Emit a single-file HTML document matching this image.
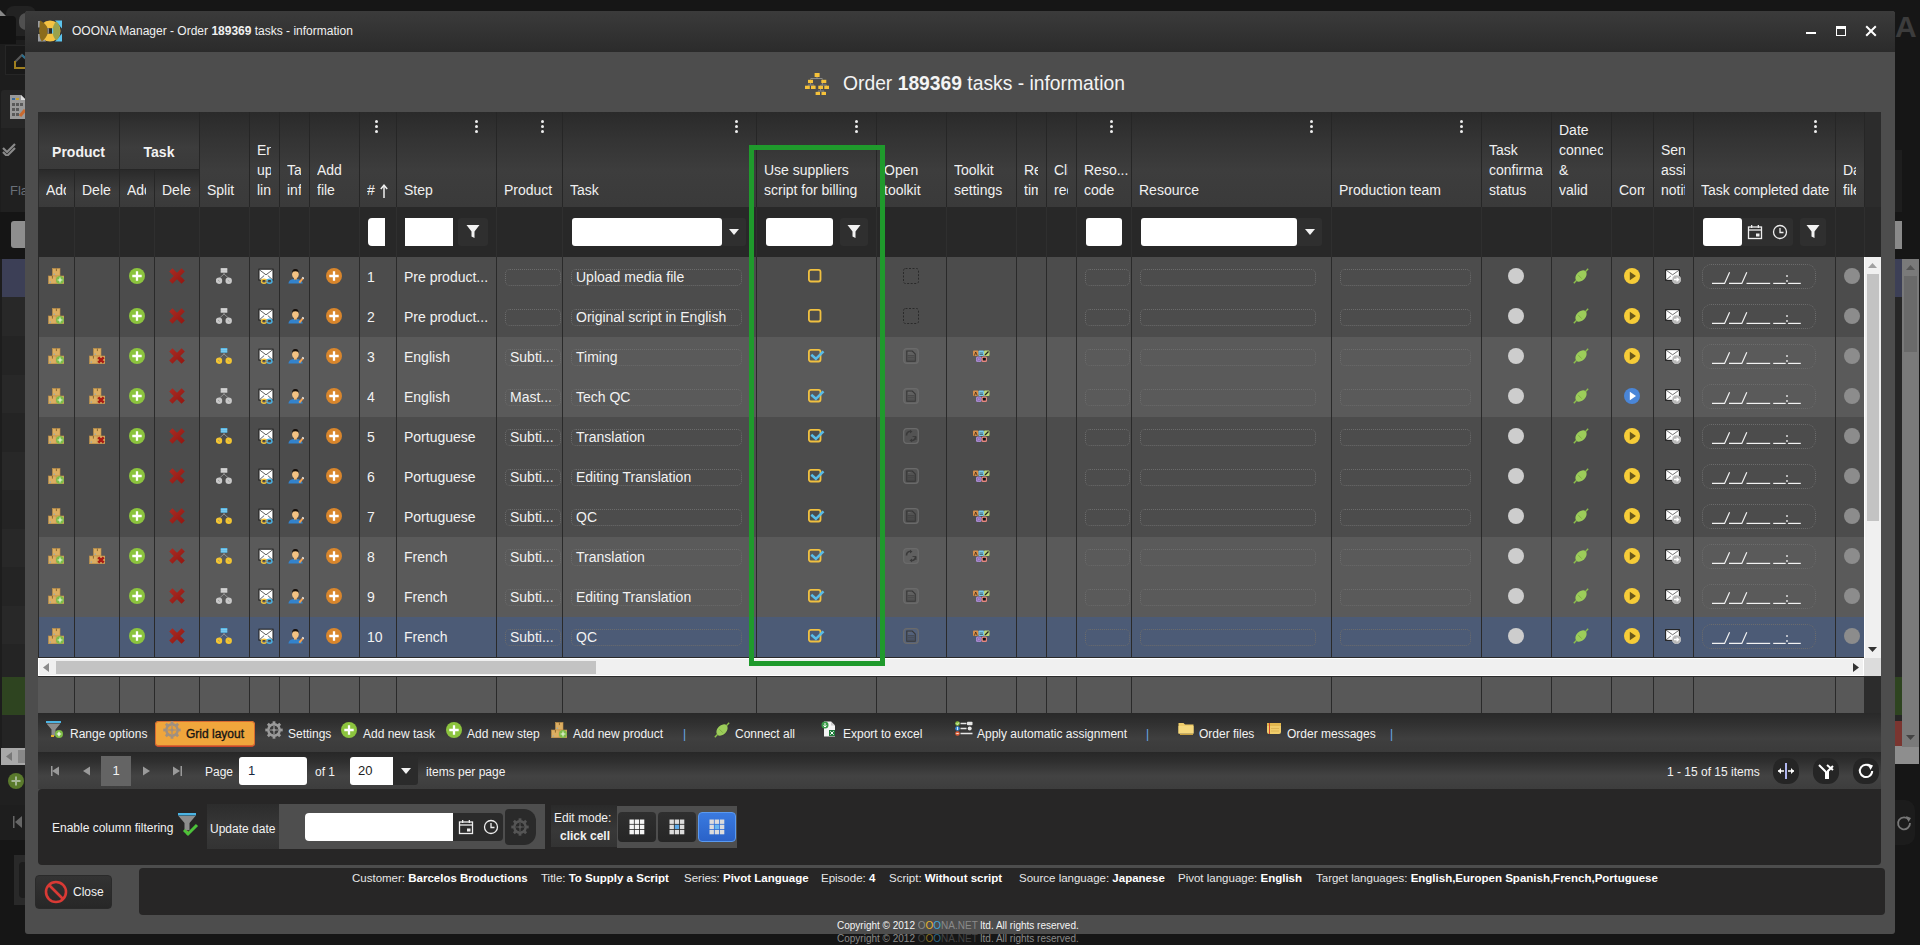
<!DOCTYPE html><html><head><meta charset="utf-8"><style>
*{margin:0;padding:0;box-sizing:border-box}
html,body{width:1920px;height:945px;overflow:hidden;background:#161616;font-family:"Liberation Sans",sans-serif;color:#f2f2f2}
.a{position:absolute}
.win{left:25px;top:11px;width:1870px;height:923px;background:#4d4d4d;border-radius:3px}
.tb{left:25px;top:11px;width:1870px;height:41px;background:linear-gradient(#3b3b3b,#2b2b2b);border-radius:3px 3px 0 0}
.hc{background:linear-gradient(#2a2a2a 0%,#343434 30%,#3d3d3d 62%,#3a3a3a 100%);border-right:1px solid #262626}
.fc{background:#282828;border-right:1px solid #2b2b2b}
.t14{font-size:14px;line-height:20px;white-space:nowrap;overflow:hidden}
.cl{background:#2c2c2c;width:1px}
.dots{width:3px;height:13px}
.dots i{position:absolute;left:0;width:3px;height:3px;border-radius:2px;background:#eee}
.inp{background:#fff;border-radius:3px}
.fbtn{background:#2f2f2f;border-radius:3px}
.dbox{border:1px dotted #6c6c6c;border-radius:5px}
.txt{font-size:14px;white-space:nowrap;line-height:20px}
.tool{font-size:12px;white-space:nowrap;line-height:16px}
</style></head><body>
<div class="a" style="left:0;top:0;width:1920px;height:945px;background:#161616"></div>
<div class="a" style="left:0;top:40px;width:25px;height:800px;background:#1d1d1d"></div>
<div class="a" style="left:5px;top:45px;width:25px;height:30px;border:1px solid #262626;background:#191919"></div>
<svg class="a" style="left:14px;top:52px" width="12" height="18" viewBox="0 0 12 18"><path d="M1 10l7-7 4 4" stroke="#5a5a5a" stroke-width="2" fill="none"/><path d="M1 9v7h11" stroke="#a08020" stroke-width="2" fill="none"/><path d="M8 3l3 3" stroke="#2a7090" stroke-width="2"/></svg>
<div class="a" style="left:1px;top:90px;width:25px;height:38px;background:#262626;border-radius:3px 0 0 0"></div>
<div class="a" style="left:6px;top:6px;width:30px;height:30px;background:#222;border-radius:8px"></div>
<svg class="a" style="left:0;top:10px" width="7" height="7" viewBox="0 0 7 7"><path d="M0 0l6 6H0z" fill="#888"/></svg>
<div class="a" style="left:0;top:16px;width:16px;height:28px;background:#121212;border-radius:0 4px 0 0"></div>
<div class="a" style="left:19px;top:13px;width:14px;height:17px;background:#505050;border-radius:8px"></div>
<svg class="a" style="left:10px;top:95px" width="16" height="24" viewBox="0 0 16 24"><path d="M0 0h11l5 5v19H0z" fill="#9a9a9a"/><path d="M11 0v5h5" fill="#ddd"/><rect x="2" y="3" width="3" height="2" fill="#3a6a9a"/><rect x="6" y="3" width="3" height="2" fill="#c8a030"/><g fill="#5a5a5a"><rect x="2" y="8" width="3" height="3"/><rect x="6" y="8" width="3" height="3"/><rect x="10" y="8" width="3" height="3"/><rect x="2" y="13" width="3" height="3"/><rect x="6" y="13" width="3" height="3"/><rect x="2" y="18" width="3" height="3"/><rect x="6" y="18" width="3" height="3"/></g><path d="M10 21l5-6" stroke="#c86a30" stroke-width="3"/></svg>
<div class="a" style="left:1px;top:128px;width:25px;height:84px;background:#202020"></div>
<svg class="a" style="left:2px;top:142px" width="14" height="14" viewBox="0 0 14 14"><path d="M1 6l4 4 8-8M1 10l4 4 8-8" stroke="#8a8a8a" stroke-width="2.2" fill="none"/></svg>
<div class="a" style="left:10px;top:183px;font-size:13px;line-height:16px;color:#6a7078">Fla</div>
<div class="a" style="left:0;top:212px;width:25px;height:47px;background:#151515"></div>
<div class="a" style="left:11px;top:221px;width:20px;height:27px;background:#8e8e8e;border-radius:3px"></div>
<div class="a" style="left:2px;top:259px;width:23px;height:40px;background:#3c3f56"></div>
<div class="a" style="left:2px;top:297px;width:23px;height:40px;background:#282828"></div>
<div class="a" style="left:2px;top:336px;width:23px;height:40px;background:#242424"></div>
<div class="a" style="left:2px;top:375px;width:23px;height:40px;background:#282828"></div>
<div class="a" style="left:2px;top:413px;width:23px;height:40px;background:#242424"></div>
<div class="a" style="left:2px;top:452px;width:23px;height:40px;background:#282828"></div>
<div class="a" style="left:2px;top:490px;width:23px;height:40px;background:#242424"></div>
<div class="a" style="left:2px;top:529px;width:23px;height:40px;background:#282828"></div>
<div class="a" style="left:2px;top:567px;width:23px;height:40px;background:#242424"></div>
<div class="a" style="left:2px;top:606px;width:23px;height:40px;background:#282828"></div>
<div class="a" style="left:2px;top:644px;width:23px;height:40px;background:#242424"></div>
<div class="a" style="left:2px;top:677px;width:23px;height:40px;background:#2e4420"></div>
<div class="a" style="left:2px;top:715px;width:23px;height:40px;background:#242424"></div>
<div class="a" style="left:1px;top:748px;width:24px;height:17px;background:#a8a8a8"></div>
<div class="a" style="left:18px;top:750px;width:7px;height:13px;background:#888"></div>
<svg class="a" style="left:6px;top:752px" width="6" height="9" viewBox="0 0 6 9"><path d="M6 0v9L0 4.5z" fill="#777"/></svg>
<div class="a" style="left:0;top:765px;width:25px;height:40px;background:#202020"></div>
<svg class="a" style="left:8px;top:773px" width="16" height="16" viewBox="0 0 16 16"><circle cx="8" cy="8" r="8" fill="#5a7a2c"/><path d="M8 3.5v9M3.5 8h9" stroke="#a8b898" stroke-width="2"/></svg>
<div class="a" style="left:0;top:805px;width:25px;height:35px;background:#1e1e1e"></div>
<svg class="a" style="left:13px;top:816px" width="9" height="12" viewBox="0 0 9 12"><rect x="0" y="0" width="1.5" height="12" fill="#666"/><path d="M9 0v12L2 6z" fill="#666"/></svg>
<div class="a" style="left:14px;top:855px;width:11px;height:50px;background:#292929"></div>
<div class="a" style="left:19px;top:862px;width:8px;height:36px;background:#1c1c1c;border-radius:4px"></div>
<div class="a" style="left:1895px;top:12px;font-size:30px;font-weight:bold;line-height:30px;color:#3c3c3c">A</div>
<div class="a" style="left:1895px;top:150px;width:7px;height:62px;background:#1e1e1e"></div>
<div class="a" style="left:1895px;top:221px;width:7px;height:28px;background:#8a8a8a"></div>
<div class="a" style="left:1895px;top:259px;width:7px;height:38px;background:#3c3f56"></div>
<div class="a" style="left:1895px;top:297px;width:7px;height:450px;background:#262626"></div>
<div class="a" style="left:1895px;top:677px;width:7px;height:38px;background:#2e4420"></div>
<div class="a" style="left:1895px;top:721px;width:7px;height:25px;background:#7a3530"></div>
<div class="a" style="left:1895px;top:746px;width:24px;height:18px;background:#8e8e8e"></div>
<div class="a" style="left:1902px;top:259px;width:17px;height:488px;background:#7a7a7a"></div>
<div class="a" style="left:1904px;top:276px;width:13px;height:76px;background:#6a6a6a"></div>
<svg class="a" style="left:1906px;top:265px" width="9" height="5" viewBox="0 0 9 5"><path d="M0 5h9L4.5 0z" fill="#555"/></svg>
<svg class="a" style="left:1906px;top:735px" width="9" height="5" viewBox="0 0 9 5"><path d="M0 0h9L4.5 5z" fill="#444"/></svg>
<div class="a" style="left:1895px;top:800px;width:20px;height:45px;background:#1c1c1c;border-radius:0 10px 10px 0"></div>
<svg class="a" style="left:1896px;top:815px" width="16" height="16" viewBox="0 0 16 16"><path d="M13 5A6 6 0 1 0 14 8" stroke="#777" stroke-width="1.8" fill="none"/><path d="M10 1l5 2-2.5 4z" fill="#777"/></svg>
<div class="a win"></div>
<div class="a tb"></div>
<div class="a" style="left:72px;top:23px;font-size:12px;line-height:16px;color:#f0f0f0;white-space:nowrap">OOONA Manager - Order <b>189369</b> tasks - information</div>
<div class="a" style="left:805px;top:73px;width:26px;height:24px"><svg width="26" height="24" viewBox="0 0 26 24"><g stroke="#9a9a9a" stroke-width="0.8" fill="none"><path d="M12 4v1.5M5.5 6.5v1M17.5 6.5v1M5.5 5.5h12M5.5 10v1.5M3 12.5v1M9 12.5v1M3 12h6M17.5 10v1.5M15.5 12.5v1M21.5 12.5v1M15.5 12h6M15.5 16v1.5M13 18.5v1M19 18.5v1M13 18h6"/></g><g fill="#f6c23a"><rect x="9.6" y="0" width="5" height="4"/><rect x="3" y="6.8" width="5" height="3.3"/><rect x="16.3" y="6.8" width="5" height="3.3"/><rect x="0" y="12.7" width="4.8" height="3.3"/><rect x="6" y="12.7" width="4.6" height="3.3"/><rect x="13.3" y="12.7" width="4.7" height="3.3"/><rect x="19.3" y="12.7" width="4.7" height="3.3"/><rect x="10.6" y="18.9" width="4.4" height="3.1"/><rect x="16.5" y="18.9" width="4.5" height="3.1"/></g></svg></div>
<div class="a" style="left:843px;top:73px;font-size:19.3px;line-height:22px;color:#f4f4f4;white-space:nowrap">Order <b>189369</b> tasks - information</div>
<div class="a" style="left:38px;top:112px;width:1843px;height:145px;background:#2c2c2c"></div>
<div class="a hc" style="left:39px;top:170px;width:36px;height:37px"></div>
<div class="a t14" style="left:46px;top:180px;width:20px;color:#f0f0f0">Add</div>
<div class="a hc" style="left:75px;top:170px;width:45px;height:37px"></div>
<div class="a t14" style="left:82px;top:180px;width:29px;color:#f0f0f0">Delete</div>
<div class="a hc" style="left:120px;top:170px;width:35px;height:37px"></div>
<div class="a t14" style="left:127px;top:180px;width:19px;color:#f0f0f0">Add</div>
<div class="a hc" style="left:155px;top:170px;width:45px;height:37px"></div>
<div class="a t14" style="left:162px;top:180px;width:29px;color:#f0f0f0">Delete</div>
<div class="a hc" style="left:200px;top:112px;width:50px;height:95px"></div>
<div class="a t14" style="left:207px;top:180px;width:70px;color:#f0f0f0">Split</div>
<div class="a hc" style="left:250px;top:112px;width:30px;height:95px"></div>
<div class="a t14" style="left:257px;top:140px;width:14px;color:#f0f0f0">Enable<br>upload<br>link</div>
<div class="a hc" style="left:280px;top:112px;width:30px;height:95px"></div>
<div class="a t14" style="left:287px;top:160px;width:14px;color:#f0f0f0">Task<br>info</div>
<div class="a hc" style="left:310px;top:112px;width:50px;height:95px"></div>
<div class="a t14" style="left:317px;top:160px;width:70px;color:#f0f0f0">Add<br>file</div>
<div class="a hc" style="left:360px;top:112px;width:37px;height:95px"></div>
<div class="a t14" style="left:367px;top:180px;width:57px;color:#f0f0f0">#</div>
<div class="a dots" style="left:375px;top:120px"><i style="top:0"></i><i style="top:5px"></i><i style="top:10px"></i></div>
<div class="a hc" style="left:397px;top:112px;width:100px;height:95px"></div>
<div class="a t14" style="left:404px;top:180px;width:120px;color:#f0f0f0">Step</div>
<div class="a dots" style="left:475px;top:120px"><i style="top:0"></i><i style="top:5px"></i><i style="top:10px"></i></div>
<div class="a hc" style="left:497px;top:112px;width:66px;height:95px"></div>
<div class="a t14" style="left:504px;top:180px;width:86px;color:#f0f0f0">Product</div>
<div class="a dots" style="left:541px;top:120px"><i style="top:0"></i><i style="top:5px"></i><i style="top:10px"></i></div>
<div class="a hc" style="left:563px;top:112px;width:194px;height:95px"></div>
<div class="a t14" style="left:570px;top:180px;width:214px;color:#f0f0f0">Task</div>
<div class="a dots" style="left:735px;top:120px"><i style="top:0"></i><i style="top:5px"></i><i style="top:10px"></i></div>
<div class="a hc" style="left:757px;top:112px;width:120px;height:95px"></div>
<div class="a t14" style="left:764px;top:160px;width:140px;color:#f0f0f0">Use suppliers<br>script for billing</div>
<div class="a dots" style="left:855px;top:120px"><i style="top:0"></i><i style="top:5px"></i><i style="top:10px"></i></div>
<div class="a hc" style="left:877px;top:112px;width:70px;height:95px"></div>
<div class="a t14" style="left:884px;top:160px;width:90px;color:#f0f0f0">Open<br>toolkit</div>
<div class="a hc" style="left:947px;top:112px;width:70px;height:95px"></div>
<div class="a t14" style="left:954px;top:160px;width:90px;color:#f0f0f0">Toolkit<br>settings</div>
<div class="a hc" style="left:1017px;top:112px;width:30px;height:95px"></div>
<div class="a t14" style="left:1024px;top:160px;width:14px;color:#f0f0f0">Req<br>time</div>
<div class="a hc" style="left:1047px;top:112px;width:30px;height:95px"></div>
<div class="a t14" style="left:1054px;top:160px;width:14px;color:#f0f0f0">Client<br>req</div>
<div class="a hc" style="left:1077px;top:112px;width:55px;height:95px"></div>
<div class="a t14" style="left:1084px;top:160px;width:75px;color:#f0f0f0">Reso...<br>code</div>
<div class="a dots" style="left:1110px;top:120px"><i style="top:0"></i><i style="top:5px"></i><i style="top:10px"></i></div>
<div class="a hc" style="left:1132px;top:112px;width:200px;height:95px"></div>
<div class="a t14" style="left:1139px;top:180px;width:220px;color:#f0f0f0">Resource</div>
<div class="a dots" style="left:1310px;top:120px"><i style="top:0"></i><i style="top:5px"></i><i style="top:10px"></i></div>
<div class="a hc" style="left:1332px;top:112px;width:150px;height:95px"></div>
<div class="a t14" style="left:1339px;top:180px;width:170px;color:#f0f0f0">Production team</div>
<div class="a dots" style="left:1460px;top:120px"><i style="top:0"></i><i style="top:5px"></i><i style="top:10px"></i></div>
<div class="a hc" style="left:1482px;top:112px;width:70px;height:95px"></div>
<div class="a t14" style="left:1489px;top:140px;width:54px;color:#f0f0f0">Task<br>confirmation<br>status</div>
<div class="a hc" style="left:1552px;top:112px;width:60px;height:95px"></div>
<div class="a t14" style="left:1559px;top:120px;width:44px;color:#f0f0f0">Date<br>connection<br>&<br>valid</div>
<div class="a hc" style="left:1612px;top:112px;width:42px;height:95px"></div>
<div class="a t14" style="left:1619px;top:180px;width:26px;color:#f0f0f0">Comments</div>
<div class="a hc" style="left:1654px;top:112px;width:40px;height:95px"></div>
<div class="a t14" style="left:1661px;top:140px;width:24px;color:#f0f0f0">Send<br>assignment<br>notification</div>
<div class="a hc" style="left:1694px;top:112px;width:142px;height:95px"></div>
<div class="a t14" style="left:1701px;top:180px;width:162px;color:#f0f0f0">Task completed date</div>
<div class="a dots" style="left:1814px;top:120px"><i style="top:0"></i><i style="top:5px"></i><i style="top:10px"></i></div>
<div class="a hc" style="left:1836px;top:112px;width:29px;height:95px"></div>
<div class="a t14" style="left:1843px;top:160px;width:13px;color:#f0f0f0">Date<br>files</div>
<svg class="a" style="left:380px;top:184px" width="8" height="14" viewBox="0 0 8 14"><path d="M4 1.5v12.5" stroke="#f0f0f0" stroke-width="1.5"/><path d="M0.8 5L4 1.2 7.2 5" stroke="#f0f0f0" stroke-width="1.5" fill="none"/></svg>
<div class="a hc" style="left:39px;top:112px;width:81px;height:58px;border-bottom:1px solid #262626"></div>
<div class="a" style="left:38px;top:143px;width:81px;text-align:center;font-size:14px;font-weight:bold;line-height:18px">Product</div>
<div class="a hc" style="left:120px;top:112px;width:80px;height:58px;border-bottom:1px solid #262626"></div>
<div class="a" style="left:119px;top:143px;width:80px;text-align:center;font-size:14px;font-weight:bold;line-height:18px">Task</div>
<div class="a" style="left:38px;top:207px;width:1843px;height:50px;background:#282828"></div>
<div class="a" style="left:74px;top:207px;width:1px;height:50px;background:#2f2f2f"></div>
<div class="a" style="left:119px;top:207px;width:1px;height:50px;background:#2f2f2f"></div>
<div class="a" style="left:154px;top:207px;width:1px;height:50px;background:#2f2f2f"></div>
<div class="a" style="left:199px;top:207px;width:1px;height:50px;background:#2f2f2f"></div>
<div class="a" style="left:249px;top:207px;width:1px;height:50px;background:#2f2f2f"></div>
<div class="a" style="left:279px;top:207px;width:1px;height:50px;background:#2f2f2f"></div>
<div class="a" style="left:309px;top:207px;width:1px;height:50px;background:#2f2f2f"></div>
<div class="a" style="left:359px;top:207px;width:1px;height:50px;background:#2f2f2f"></div>
<div class="a" style="left:396px;top:207px;width:1px;height:50px;background:#2f2f2f"></div>
<div class="a" style="left:496px;top:207px;width:1px;height:50px;background:#2f2f2f"></div>
<div class="a" style="left:562px;top:207px;width:1px;height:50px;background:#2f2f2f"></div>
<div class="a" style="left:756px;top:207px;width:1px;height:50px;background:#2f2f2f"></div>
<div class="a" style="left:876px;top:207px;width:1px;height:50px;background:#2f2f2f"></div>
<div class="a" style="left:946px;top:207px;width:1px;height:50px;background:#2f2f2f"></div>
<div class="a" style="left:1016px;top:207px;width:1px;height:50px;background:#2f2f2f"></div>
<div class="a" style="left:1046px;top:207px;width:1px;height:50px;background:#2f2f2f"></div>
<div class="a" style="left:1076px;top:207px;width:1px;height:50px;background:#2f2f2f"></div>
<div class="a" style="left:1131px;top:207px;width:1px;height:50px;background:#2f2f2f"></div>
<div class="a" style="left:1331px;top:207px;width:1px;height:50px;background:#2f2f2f"></div>
<div class="a" style="left:1481px;top:207px;width:1px;height:50px;background:#2f2f2f"></div>
<div class="a" style="left:1551px;top:207px;width:1px;height:50px;background:#2f2f2f"></div>
<div class="a" style="left:1611px;top:207px;width:1px;height:50px;background:#2f2f2f"></div>
<div class="a" style="left:1653px;top:207px;width:1px;height:50px;background:#2f2f2f"></div>
<div class="a" style="left:1693px;top:207px;width:1px;height:50px;background:#2f2f2f"></div>
<div class="a" style="left:1835px;top:207px;width:1px;height:50px;background:#2f2f2f"></div>
<div class="a" style="left:1864px;top:207px;width:1px;height:50px;background:#2f2f2f"></div>
<div class="a inp" style="left:368px;top:218px;width:17px;height:28px;border-radius:4px 0 0 4px"></div>
<div class="a inp" style="left:405px;top:218px;width:48px;height:28px;border-radius:0"></div>
<div class="a fbtn" style="left:458px;top:218px;width:30px;height:28px"></div>
<svg class="a" style="left:466.0px;top:224px" width="14" height="16" viewBox="0 0 14 16"><path d="M0.5 1h13l-5 6.5v6.5l-3 -1.5v-5z" fill="#f2f2f2"/></svg>
<div class="a fbtn" style="left:572px;top:218px;width:174px;height:28px"></div>
<div class="a inp" style="left:572px;top:218px;width:150px;height:28px"></div>
<div class="a fbtn" style="left:722px;top:218px;width:24px;height:28px"></div>
<svg class="a" style="left:729.0px;top:228px" width="10" height="8" viewBox="0 0 10 8"><path d="M0 1h10l-5 6z" fill="#f2f2f2"/></svg>
<div class="a inp" style="left:766px;top:218px;width:67px;height:28px"></div>
<div class="a fbtn" style="left:840px;top:218px;width:28px;height:28px"></div>
<svg class="a" style="left:847.0px;top:224px" width="14" height="16" viewBox="0 0 14 16"><path d="M0.5 1h13l-5 6.5v6.5l-3 -1.5v-5z" fill="#f2f2f2"/></svg>
<div class="a inp" style="left:1086px;top:218px;width:36px;height:28px"></div>
<div class="a fbtn" style="left:1141px;top:218px;width:181px;height:28px"></div>
<div class="a inp" style="left:1141px;top:218px;width:156px;height:28px"></div>
<div class="a fbtn" style="left:1297px;top:218px;width:25px;height:28px"></div>
<svg class="a" style="left:1304.5px;top:228px" width="10" height="8" viewBox="0 0 10 8"><path d="M0 1h10l-5 6z" fill="#f2f2f2"/></svg>
<div class="a fbtn" style="left:1703px;top:218px;width:90px;height:28px"></div>
<div class="a inp" style="left:1703px;top:218px;width:39px;height:28px"></div>
<svg class="a" style="left:1747px;top:224px" width="16" height="16" viewBox="0 0 16 16"><rect x="1.5" y="3" width="13" height="11.5" fill="none" stroke="#eee" stroke-width="1.3"/><line x1="1.5" y1="6" x2="14.5" y2="6" stroke="#eee" stroke-width="1.3"/><rect x="4" y="1" width="1.3" height="3" fill="#eee"/><rect x="10.7" y="1" width="1.3" height="3" fill="#eee"/><rect x="9" y="9.5" width="3.5" height="3" fill="#eee"/></svg>
<svg class="a" style="left:1772px;top:224px" width="16" height="16" viewBox="0 0 16 16"><circle cx="8" cy="8" r="6.5" fill="none" stroke="#eee" stroke-width="1.3"/><path d="M8 4v4.5h3.5" fill="none" stroke="#eee" stroke-width="1.3"/></svg>
<div class="a fbtn" style="left:1800px;top:218px;width:26px;height:28px"></div>
<svg class="a" style="left:1806.0px;top:224px" width="14" height="16" viewBox="0 0 14 16"><path d="M0.5 1h13l-5 6.5v6.5l-3 -1.5v-5z" fill="#f2f2f2"/></svg>
<div class="a" style="left:38px;top:257px;width:1826px;height:40px;background:#4c4c4c"></div>
<div class="a" style="left:48px;top:268px;width:16px;height:16px"><svg width="16" height="16" viewBox="0 0 16 16"><rect x="4.5" y="0.5" width="7.5" height="7.5" fill="#dcae62" stroke="#c29247" stroke-width="0.6"/><rect x="0.5" y="8" width="15.5" height="7.8" fill="#dcae62" stroke="#c29247" stroke-width="0.6"/><line x1="8.25" y1="8" x2="8.25" y2="15.8" stroke="#c29247" stroke-width="0.6"/><rect x="7.9" y="0.5" width="0.9" height="2.6" fill="#8a6428"/><rect x="3.9" y="8" width="0.9" height="2.6" fill="#8a6428"/><rect x="5.6" y="5.6" width="1.4" height="1.4" fill="#9aa"/><rect x="1.6" y="13.4" width="1.4" height="1.4" fill="#9aa"/><circle cx="12" cy="12" r="4" fill="#7fbc4a"/><path d="M12 9.6v4.8M9.6 12h4.8" stroke="#e8f5dc" stroke-width="1.1"/></svg></div>
<div class="a" style="left:129px;top:268px;width:16px;height:16px"><svg width="16" height="16" viewBox="0 0 16 16"><circle cx="8" cy="8" r="8" fill="#8cc43e"/><path d="M8 3.3v9.4M3.3 8h9.4" stroke="#fff" stroke-width="2.3"/></svg></div>
<div class="a" style="left:169px;top:268px;width:16px;height:16px"><svg width="16" height="16" viewBox="0 0 16 16"><defs><linearGradient id="xg" x1="0" y1="0" x2="1" y2="1"><stop offset="0" stop-color="#a82a22"/><stop offset="1" stop-color="#941812"/></linearGradient></defs><path d="M1.8 1.8l12.4 12.4M14.2 1.8L1.8 14.2" stroke="url(#xg)" stroke-width="4.6"/></svg></div>
<div class="a" style="left:216px;top:268px;width:16px;height:16px"><svg width="16" height="16" viewBox="0 0 16 16"><rect x="4.7" y="0" width="6.6" height="4.8" fill="#c4c4c4"/><path d="M4.7 1.6h6.6M4.7 3.2h6.6" stroke="#fff" stroke-width="0.5" opacity="0.6"/><path d="M8 4.8v1.2L3 10.5M8 6l5 4.5" stroke="#999" stroke-width="0.9" fill="none"/><circle cx="3" cy="12.7" r="3.2" fill="#c8c8c8"/><circle cx="12.7" cy="12.7" r="3.2" fill="#c8c8c8"/><path d="M2 12l1.8 1.6M11.7 12l1.8 1.6" stroke="#888" stroke-width="0.6"/></svg></div>
<div class="a" style="left:258px;top:268px;width:16px;height:16px"><svg width="16" height="16" viewBox="0 0 16 16"><rect x="1" y="1.2" width="14" height="11" fill="#fff" stroke="#1a1a1a" stroke-width="1"/><path d="M1 1.5l7 5.3 7-5.3M1.2 12l5-4.5M14.8 12l-5-4.5" stroke="#333" stroke-width="0.8" fill="none"/><ellipse cx="6" cy="13.3" rx="2.5" ry="2" fill="none" stroke="#f0c23a" stroke-width="1.4"/><ellipse cx="11.5" cy="13.3" rx="2.5" ry="2" fill="none" stroke="#49b2e4" stroke-width="1.4"/><path d="M7.5 13.3h2.5" stroke="#888" stroke-width="1"/></svg></div>
<div class="a" style="left:288px;top:268px;width:16px;height:16px"><svg width="16" height="16" viewBox="0 0 16 16"><path d="M0.4 15.6C0.6 12.6 2.8 11.2 5.3 10.9L7.4 12.2 9.5 10.9C12 11.2 14.4 12.6 14.8 15.6z" fill="#3383cc"/><rect x="6" y="9" width="2.8" height="2.6" fill="#f0bc7c"/><ellipse cx="7.4" cy="6.2" rx="3.3" ry="3.9" fill="#f3c283"/><path d="M4.1 5.6C3.8 2.2 5.4 1 7.4 1s3.6 1.2 3.3 4.6C10.4 4 9.6 3.3 7.4 3.3S4.4 4 4.1 5.6z" fill="#17110c"/><path d="M11.3 14.6l4-4.8" stroke="#f0a050" stroke-width="2.1"/><path d="M14.6 10.6l1-1.2" stroke="#e8e8e8" stroke-width="2.1"/></svg></div>
<div class="a" style="left:326px;top:268px;width:16px;height:16px"><svg width="16" height="16" viewBox="0 0 16 16"><circle cx="8" cy="8" r="8" fill="#d9862c"/><path d="M8 3.3v9.4M3.3 8h9.4" stroke="#fff" stroke-width="2.3"/></svg></div>
<div class="a txt" style="left:367px;top:267px">1</div>
<div class="a txt" style="left:404px;top:267px">Pre product...</div>
<div class="a dbox" style="left:505px;top:269px;width:56px;height:17px"></div>
<div class="a dbox" style="left:571px;top:269px;width:171px;height:17px"></div>
<div class="a txt" style="left:576px;top:267px">Upload media file</div>
<div class="a" style="left:807px;top:268px;width:16px;height:16px"><svg width="16" height="16" viewBox="0 0 16 16"><rect x="1.9" y="1.9" width="11.6" height="11.6" rx="2" fill="none" stroke="#f0c040" stroke-width="1.8"/></svg></div>
<div class="a" style="left:903px;top:268px;width:16px;height:16px"><svg width="16" height="16" viewBox="0 0 16 16"><rect x="0.5" y="0.5" width="15" height="15" rx="2" fill="none" stroke="#2a2a2a" stroke-dasharray="2 1.5"/></svg></div>
<div class="a dbox" style="left:1085px;top:269px;width:45px;height:17px"></div>
<div class="a dbox" style="left:1140px;top:269px;width:176px;height:17px"></div>
<div class="a dbox" style="left:1340px;top:269px;width:131px;height:17px"></div>
<div class="a" style="left:1508px;top:268px;width:16px;height:16px"><svg width="16" height="16" viewBox="0 0 16 16"><circle cx="8" cy="8" r="8" fill="#cdcdcd"/></svg></div>
<div class="a" style="left:1573px;top:268px;width:16px;height:16px"><svg width="16" height="16" viewBox="0 0 16 16"><path d="M0.8 15.2l2.6-2.6M12.6 3.4l2.6-2.6" stroke="#8cc04a" stroke-width="1.4"/><ellipse cx="8" cy="8" rx="6.6" ry="4.5" transform="rotate(-45 8 8)" fill="#9ccd5a"/><path d="M5.3 7.2l3.5 3.5" stroke="#7aaa3a" stroke-width="0.8"/></svg></div>
<div class="a" style="left:1624px;top:268px;width:16px;height:16px"><svg width="16" height="16" viewBox="0 0 16 16"><circle cx="8" cy="8" r="8" fill="#f6cc38"/><path d="M5.8 3.8v8.4l6.2-4.2z" fill="#6a5818"/></svg></div>
<div class="a" style="left:1665px;top:268px;width:16px;height:16px"><svg width="16" height="16" viewBox="0 0 16 16"><rect x="0.6" y="1.6" width="13.8" height="10.8" fill="#fff" stroke="#222" stroke-width="1.1"/><path d="M0.6 1.8l7 5 7-5M0.8 12.2l5-4.2M14.2 12.2l-5-4.2" stroke="#333" stroke-width="0.7" fill="none"/><circle cx="11.5" cy="11.5" r="4.3" fill="#b8b8b8" stroke="#ddd" stroke-width="0.6"/><path d="M9 11.5h4.3M11.6 9.6l2 1.9-2 1.9" stroke="#fff" stroke-width="1.3" fill="none"/></svg></div>
<div class="a dbox" style="left:1702px;top:264px;width:114px;height:25px;border-radius:9px"></div>
<div class="a" style="left:1702px;top:264px;width:120px;height:26px"><svg width="120" height="26" viewBox="0 0 120 26"><g stroke="#f2f2f2" stroke-width="1.2" fill="none"><path d="M10 19.4h12.6l5-11.2"/><path d="M27 19.4h12.8l5-11.2"/><path d="M44.5 19.4h23.7"/><path d="M71.2 19.4h12.5"/><path d="M86.1 19.4h12.7"/></g><rect x="84.2" y="11.2" width="1.6" height="1.6" fill="#f2f2f2"/><rect x="84.2" y="16.2" width="1.6" height="1.6" fill="#f2f2f2"/></svg></div>
<div class="a" style="left:1844px;top:268px;width:16px;height:16px"><svg width="16" height="16" viewBox="0 0 16 16"><circle cx="8" cy="8" r="8" fill="#8c8c8c"/></svg></div>
<div class="a" style="left:38px;top:297px;width:1826px;height:40px;background:#4c4c4c"></div>
<div class="a" style="left:48px;top:308px;width:16px;height:16px"><svg width="16" height="16" viewBox="0 0 16 16"><rect x="4.5" y="0.5" width="7.5" height="7.5" fill="#dcae62" stroke="#c29247" stroke-width="0.6"/><rect x="0.5" y="8" width="15.5" height="7.8" fill="#dcae62" stroke="#c29247" stroke-width="0.6"/><line x1="8.25" y1="8" x2="8.25" y2="15.8" stroke="#c29247" stroke-width="0.6"/><rect x="7.9" y="0.5" width="0.9" height="2.6" fill="#8a6428"/><rect x="3.9" y="8" width="0.9" height="2.6" fill="#8a6428"/><rect x="5.6" y="5.6" width="1.4" height="1.4" fill="#9aa"/><rect x="1.6" y="13.4" width="1.4" height="1.4" fill="#9aa"/><circle cx="12" cy="12" r="4" fill="#7fbc4a"/><path d="M12 9.6v4.8M9.6 12h4.8" stroke="#e8f5dc" stroke-width="1.1"/></svg></div>
<div class="a" style="left:129px;top:308px;width:16px;height:16px"><svg width="16" height="16" viewBox="0 0 16 16"><circle cx="8" cy="8" r="8" fill="#8cc43e"/><path d="M8 3.3v9.4M3.3 8h9.4" stroke="#fff" stroke-width="2.3"/></svg></div>
<div class="a" style="left:169px;top:308px;width:16px;height:16px"><svg width="16" height="16" viewBox="0 0 16 16"><defs><linearGradient id="xg" x1="0" y1="0" x2="1" y2="1"><stop offset="0" stop-color="#a82a22"/><stop offset="1" stop-color="#941812"/></linearGradient></defs><path d="M1.8 1.8l12.4 12.4M14.2 1.8L1.8 14.2" stroke="url(#xg)" stroke-width="4.6"/></svg></div>
<div class="a" style="left:216px;top:308px;width:16px;height:16px"><svg width="16" height="16" viewBox="0 0 16 16"><rect x="4.7" y="0" width="6.6" height="4.8" fill="#c4c4c4"/><path d="M4.7 1.6h6.6M4.7 3.2h6.6" stroke="#fff" stroke-width="0.5" opacity="0.6"/><path d="M8 4.8v1.2L3 10.5M8 6l5 4.5" stroke="#999" stroke-width="0.9" fill="none"/><circle cx="3" cy="12.7" r="3.2" fill="#c8c8c8"/><circle cx="12.7" cy="12.7" r="3.2" fill="#c8c8c8"/><path d="M2 12l1.8 1.6M11.7 12l1.8 1.6" stroke="#888" stroke-width="0.6"/></svg></div>
<div class="a" style="left:258px;top:308px;width:16px;height:16px"><svg width="16" height="16" viewBox="0 0 16 16"><rect x="1" y="1.2" width="14" height="11" fill="#fff" stroke="#1a1a1a" stroke-width="1"/><path d="M1 1.5l7 5.3 7-5.3M1.2 12l5-4.5M14.8 12l-5-4.5" stroke="#333" stroke-width="0.8" fill="none"/><ellipse cx="6" cy="13.3" rx="2.5" ry="2" fill="none" stroke="#f0c23a" stroke-width="1.4"/><ellipse cx="11.5" cy="13.3" rx="2.5" ry="2" fill="none" stroke="#49b2e4" stroke-width="1.4"/><path d="M7.5 13.3h2.5" stroke="#888" stroke-width="1"/></svg></div>
<div class="a" style="left:288px;top:308px;width:16px;height:16px"><svg width="16" height="16" viewBox="0 0 16 16"><path d="M0.4 15.6C0.6 12.6 2.8 11.2 5.3 10.9L7.4 12.2 9.5 10.9C12 11.2 14.4 12.6 14.8 15.6z" fill="#3383cc"/><rect x="6" y="9" width="2.8" height="2.6" fill="#f0bc7c"/><ellipse cx="7.4" cy="6.2" rx="3.3" ry="3.9" fill="#f3c283"/><path d="M4.1 5.6C3.8 2.2 5.4 1 7.4 1s3.6 1.2 3.3 4.6C10.4 4 9.6 3.3 7.4 3.3S4.4 4 4.1 5.6z" fill="#17110c"/><path d="M11.3 14.6l4-4.8" stroke="#f0a050" stroke-width="2.1"/><path d="M14.6 10.6l1-1.2" stroke="#e8e8e8" stroke-width="2.1"/></svg></div>
<div class="a" style="left:326px;top:308px;width:16px;height:16px"><svg width="16" height="16" viewBox="0 0 16 16"><circle cx="8" cy="8" r="8" fill="#d9862c"/><path d="M8 3.3v9.4M3.3 8h9.4" stroke="#fff" stroke-width="2.3"/></svg></div>
<div class="a txt" style="left:367px;top:307px">2</div>
<div class="a txt" style="left:404px;top:307px">Pre product...</div>
<div class="a dbox" style="left:505px;top:309px;width:56px;height:17px"></div>
<div class="a dbox" style="left:571px;top:309px;width:171px;height:17px"></div>
<div class="a txt" style="left:576px;top:307px">Original script in English</div>
<div class="a" style="left:807px;top:308px;width:16px;height:16px"><svg width="16" height="16" viewBox="0 0 16 16"><rect x="1.9" y="1.9" width="11.6" height="11.6" rx="2" fill="none" stroke="#f0c040" stroke-width="1.8"/></svg></div>
<div class="a" style="left:903px;top:308px;width:16px;height:16px"><svg width="16" height="16" viewBox="0 0 16 16"><rect x="0.5" y="0.5" width="15" height="15" rx="2" fill="none" stroke="#2a2a2a" stroke-dasharray="2 1.5"/></svg></div>
<div class="a dbox" style="left:1085px;top:309px;width:45px;height:17px"></div>
<div class="a dbox" style="left:1140px;top:309px;width:176px;height:17px"></div>
<div class="a dbox" style="left:1340px;top:309px;width:131px;height:17px"></div>
<div class="a" style="left:1508px;top:308px;width:16px;height:16px"><svg width="16" height="16" viewBox="0 0 16 16"><circle cx="8" cy="8" r="8" fill="#cdcdcd"/></svg></div>
<div class="a" style="left:1573px;top:308px;width:16px;height:16px"><svg width="16" height="16" viewBox="0 0 16 16"><path d="M0.8 15.2l2.6-2.6M12.6 3.4l2.6-2.6" stroke="#8cc04a" stroke-width="1.4"/><ellipse cx="8" cy="8" rx="6.6" ry="4.5" transform="rotate(-45 8 8)" fill="#9ccd5a"/><path d="M5.3 7.2l3.5 3.5" stroke="#7aaa3a" stroke-width="0.8"/></svg></div>
<div class="a" style="left:1624px;top:308px;width:16px;height:16px"><svg width="16" height="16" viewBox="0 0 16 16"><circle cx="8" cy="8" r="8" fill="#f6cc38"/><path d="M5.8 3.8v8.4l6.2-4.2z" fill="#6a5818"/></svg></div>
<div class="a" style="left:1665px;top:308px;width:16px;height:16px"><svg width="16" height="16" viewBox="0 0 16 16"><rect x="0.6" y="1.6" width="13.8" height="10.8" fill="#fff" stroke="#222" stroke-width="1.1"/><path d="M0.6 1.8l7 5 7-5M0.8 12.2l5-4.2M14.2 12.2l-5-4.2" stroke="#333" stroke-width="0.7" fill="none"/><circle cx="11.5" cy="11.5" r="4.3" fill="#b8b8b8" stroke="#ddd" stroke-width="0.6"/><path d="M9 11.5h4.3M11.6 9.6l2 1.9-2 1.9" stroke="#fff" stroke-width="1.3" fill="none"/></svg></div>
<div class="a dbox" style="left:1702px;top:304px;width:114px;height:25px;border-radius:9px"></div>
<div class="a" style="left:1702px;top:304px;width:120px;height:26px"><svg width="120" height="26" viewBox="0 0 120 26"><g stroke="#f2f2f2" stroke-width="1.2" fill="none"><path d="M10 19.4h12.6l5-11.2"/><path d="M27 19.4h12.8l5-11.2"/><path d="M44.5 19.4h23.7"/><path d="M71.2 19.4h12.5"/><path d="M86.1 19.4h12.7"/></g><rect x="84.2" y="11.2" width="1.6" height="1.6" fill="#f2f2f2"/><rect x="84.2" y="16.2" width="1.6" height="1.6" fill="#f2f2f2"/></svg></div>
<div class="a" style="left:1844px;top:308px;width:16px;height:16px"><svg width="16" height="16" viewBox="0 0 16 16"><circle cx="8" cy="8" r="8" fill="#8c8c8c"/></svg></div>
<div class="a" style="left:38px;top:337px;width:1826px;height:40px;background:#5a5a5a"></div>
<div class="a" style="left:48px;top:348px;width:16px;height:16px"><svg width="16" height="16" viewBox="0 0 16 16"><rect x="4.5" y="0.5" width="7.5" height="7.5" fill="#dcae62" stroke="#c29247" stroke-width="0.6"/><rect x="0.5" y="8" width="15.5" height="7.8" fill="#dcae62" stroke="#c29247" stroke-width="0.6"/><line x1="8.25" y1="8" x2="8.25" y2="15.8" stroke="#c29247" stroke-width="0.6"/><rect x="7.9" y="0.5" width="0.9" height="2.6" fill="#8a6428"/><rect x="3.9" y="8" width="0.9" height="2.6" fill="#8a6428"/><rect x="5.6" y="5.6" width="1.4" height="1.4" fill="#9aa"/><rect x="1.6" y="13.4" width="1.4" height="1.4" fill="#9aa"/><circle cx="12" cy="12" r="4" fill="#7fbc4a"/><path d="M12 9.6v4.8M9.6 12h4.8" stroke="#e8f5dc" stroke-width="1.1"/></svg></div>
<div class="a" style="left:89px;top:348px;width:16px;height:16px"><svg width="16" height="16" viewBox="0 0 16 16"><rect x="4.5" y="0.5" width="7.5" height="7.5" fill="#dcae62" stroke="#c29247" stroke-width="0.6"/><rect x="0.5" y="8" width="15.5" height="7.8" fill="#dcae62" stroke="#c29247" stroke-width="0.6"/><line x1="8.25" y1="8" x2="8.25" y2="15.8" stroke="#c29247" stroke-width="0.6"/><rect x="7.9" y="0.5" width="0.9" height="2.6" fill="#8a6428"/><rect x="3.9" y="8" width="0.9" height="2.6" fill="#8a6428"/><rect x="5.6" y="5.6" width="1.4" height="1.4" fill="#9aa"/><rect x="1.6" y="13.4" width="1.4" height="1.4" fill="#9aa"/><path d="M9.3 9.3l5.4 5.4M14.7 9.3l-5.4 5.4" stroke="#a81a14" stroke-width="2.6"/></svg></div>
<div class="a" style="left:129px;top:348px;width:16px;height:16px"><svg width="16" height="16" viewBox="0 0 16 16"><circle cx="8" cy="8" r="8" fill="#8cc43e"/><path d="M8 3.3v9.4M3.3 8h9.4" stroke="#fff" stroke-width="2.3"/></svg></div>
<div class="a" style="left:169px;top:348px;width:16px;height:16px"><svg width="16" height="16" viewBox="0 0 16 16"><defs><linearGradient id="xg" x1="0" y1="0" x2="1" y2="1"><stop offset="0" stop-color="#a82a22"/><stop offset="1" stop-color="#941812"/></linearGradient></defs><path d="M1.8 1.8l12.4 12.4M14.2 1.8L1.8 14.2" stroke="url(#xg)" stroke-width="4.6"/></svg></div>
<div class="a" style="left:216px;top:348px;width:16px;height:16px"><svg width="16" height="16" viewBox="0 0 16 16"><rect x="4.7" y="0" width="6.6" height="4.8" fill="#55b9e8"/><path d="M4.7 1.6h6.6M4.7 3.2h6.6" stroke="#fff" stroke-width="0.5" opacity="0.6"/><path d="M8 4.8v1.2L3 10.5M8 6l5 4.5" stroke="#999" stroke-width="0.9" fill="none"/><circle cx="3" cy="12.7" r="3.2" fill="#f2c431"/><circle cx="12.7" cy="12.7" r="3.2" fill="#f2c431"/><path d="M2 12l1.8 1.6M11.7 12l1.8 1.6" stroke="#888" stroke-width="0.6"/></svg></div>
<div class="a" style="left:258px;top:348px;width:16px;height:16px"><svg width="16" height="16" viewBox="0 0 16 16"><rect x="1" y="1.2" width="14" height="11" fill="#fff" stroke="#1a1a1a" stroke-width="1"/><path d="M1 1.5l7 5.3 7-5.3M1.2 12l5-4.5M14.8 12l-5-4.5" stroke="#333" stroke-width="0.8" fill="none"/><ellipse cx="6" cy="13.3" rx="2.5" ry="2" fill="none" stroke="#f0c23a" stroke-width="1.4"/><ellipse cx="11.5" cy="13.3" rx="2.5" ry="2" fill="none" stroke="#49b2e4" stroke-width="1.4"/><path d="M7.5 13.3h2.5" stroke="#888" stroke-width="1"/></svg></div>
<div class="a" style="left:288px;top:348px;width:16px;height:16px"><svg width="16" height="16" viewBox="0 0 16 16"><path d="M0.4 15.6C0.6 12.6 2.8 11.2 5.3 10.9L7.4 12.2 9.5 10.9C12 11.2 14.4 12.6 14.8 15.6z" fill="#3383cc"/><rect x="6" y="9" width="2.8" height="2.6" fill="#f0bc7c"/><ellipse cx="7.4" cy="6.2" rx="3.3" ry="3.9" fill="#f3c283"/><path d="M4.1 5.6C3.8 2.2 5.4 1 7.4 1s3.6 1.2 3.3 4.6C10.4 4 9.6 3.3 7.4 3.3S4.4 4 4.1 5.6z" fill="#17110c"/><path d="M11.3 14.6l4-4.8" stroke="#f0a050" stroke-width="2.1"/><path d="M14.6 10.6l1-1.2" stroke="#e8e8e8" stroke-width="2.1"/></svg></div>
<div class="a" style="left:326px;top:348px;width:16px;height:16px"><svg width="16" height="16" viewBox="0 0 16 16"><circle cx="8" cy="8" r="8" fill="#d9862c"/><path d="M8 3.3v9.4M3.3 8h9.4" stroke="#fff" stroke-width="2.3"/></svg></div>
<div class="a txt" style="left:367px;top:347px">3</div>
<div class="a txt" style="left:404px;top:347px">English</div>
<div class="a dbox" style="left:505px;top:349px;width:56px;height:17px"></div>
<div class="a txt" style="left:510px;top:347px">Subti...</div>
<div class="a dbox" style="left:571px;top:349px;width:171px;height:17px"></div>
<div class="a txt" style="left:576px;top:347px">Timing</div>
<div class="a" style="left:807px;top:348px;width:16px;height:16px"><svg width="16" height="16" viewBox="0 0 16 16" style="overflow:visible"><rect x="1.9" y="1.9" width="11.6" height="11.6" rx="2" fill="none" stroke="#f0c040" stroke-width="1.8"/><path d="M4.3 6.8L8.9 10.8L16.5 3.3" stroke="#58bdea" stroke-width="2.5" fill="none"/></svg></div>
<div class="a" style="left:903px;top:348px;width:16px;height:16px"><svg width="16" height="16" viewBox="0 0 16 16"><rect x="0.7" y="0.7" width="14.6" height="14.6" rx="3" fill="rgba(255,255,255,0.04)" stroke="#6a6a6a" stroke-width="1.3"/><path d="M3.8 3h5.5l2.9 2.9v7.3H3.8z" fill="none" stroke="#363636" stroke-width="1.1"/><path d="M4.8 7.8h6.4M4.8 9.9h6.4M4.8 12h6.4" stroke="#3a3a3a" stroke-width="0.8"/><path d="M5 4.5h2.5" stroke="#6a6a6a" stroke-width="0.7"/></svg></div>
<div class="a" style="left:973px;top:349px;width:16px;height:14px"><svg width="17" height="13" viewBox="0 0 17 13"><rect x="0" y="0.5" width="5.5" height="5.5" rx="1" fill="#d8904a"/><path d="M1.5 5.5l1.2-3.5 1.5 3.5" stroke="#3a2a1a" stroke-width="0.8" fill="none"/><rect x="5.5" y="0.5" width="5.5" height="5.5" rx="1" fill="#78c8ea"/><path d="M6.5 3h3.5M6.5 4.5h3.5" stroke="#333" stroke-width="0.6"/><rect x="11" y="0.5" width="5.5" height="5.5" rx="1" fill="#bcd878"/><path d="M12 5l3.5-3.5" stroke="#222" stroke-width="1.2"/><rect x="3" y="6.5" width="5.5" height="5.5" rx="1.5" fill="#a88ad0"/><circle cx="5.75" cy="9.25" r="1.5" fill="none" stroke="#7a5aa0" stroke-width="0.6"/><rect x="8.5" y="6.5" width="5.5" height="5.5" rx="1.5" fill="#e88880"/><rect x="9.8" y="7.8" width="3" height="2.6" rx="0.5" fill="#111"/></svg></div>
<div class="a dbox" style="left:1085px;top:349px;width:45px;height:17px"></div>
<div class="a dbox" style="left:1140px;top:349px;width:176px;height:17px"></div>
<div class="a dbox" style="left:1340px;top:349px;width:131px;height:17px"></div>
<div class="a" style="left:1508px;top:348px;width:16px;height:16px"><svg width="16" height="16" viewBox="0 0 16 16"><circle cx="8" cy="8" r="8" fill="#cdcdcd"/></svg></div>
<div class="a" style="left:1573px;top:348px;width:16px;height:16px"><svg width="16" height="16" viewBox="0 0 16 16"><path d="M0.8 15.2l2.6-2.6M12.6 3.4l2.6-2.6" stroke="#8cc04a" stroke-width="1.4"/><ellipse cx="8" cy="8" rx="6.6" ry="4.5" transform="rotate(-45 8 8)" fill="#9ccd5a"/><path d="M5.3 7.2l3.5 3.5" stroke="#7aaa3a" stroke-width="0.8"/></svg></div>
<div class="a" style="left:1624px;top:348px;width:16px;height:16px"><svg width="16" height="16" viewBox="0 0 16 16"><circle cx="8" cy="8" r="8" fill="#f6cc38"/><path d="M5.8 3.8v8.4l6.2-4.2z" fill="#6a5818"/></svg></div>
<div class="a" style="left:1665px;top:348px;width:16px;height:16px"><svg width="16" height="16" viewBox="0 0 16 16"><rect x="0.6" y="1.6" width="13.8" height="10.8" fill="#fff" stroke="#222" stroke-width="1.1"/><path d="M0.6 1.8l7 5 7-5M0.8 12.2l5-4.2M14.2 12.2l-5-4.2" stroke="#333" stroke-width="0.7" fill="none"/><circle cx="11.5" cy="11.5" r="4.3" fill="#b8b8b8" stroke="#ddd" stroke-width="0.6"/><path d="M9 11.5h4.3M11.6 9.6l2 1.9-2 1.9" stroke="#fff" stroke-width="1.3" fill="none"/></svg></div>
<div class="a dbox" style="left:1702px;top:344px;width:114px;height:25px;border-radius:9px"></div>
<div class="a" style="left:1702px;top:344px;width:120px;height:26px"><svg width="120" height="26" viewBox="0 0 120 26"><g stroke="#f2f2f2" stroke-width="1.2" fill="none"><path d="M10 19.4h12.6l5-11.2"/><path d="M27 19.4h12.8l5-11.2"/><path d="M44.5 19.4h23.7"/><path d="M71.2 19.4h12.5"/><path d="M86.1 19.4h12.7"/></g><rect x="84.2" y="11.2" width="1.6" height="1.6" fill="#f2f2f2"/><rect x="84.2" y="16.2" width="1.6" height="1.6" fill="#f2f2f2"/></svg></div>
<div class="a" style="left:1844px;top:348px;width:16px;height:16px"><svg width="16" height="16" viewBox="0 0 16 16"><circle cx="8" cy="8" r="8" fill="#8c8c8c"/></svg></div>
<div class="a" style="left:38px;top:377px;width:1826px;height:40px;background:#5a5a5a"></div>
<div class="a" style="left:48px;top:388px;width:16px;height:16px"><svg width="16" height="16" viewBox="0 0 16 16"><rect x="4.5" y="0.5" width="7.5" height="7.5" fill="#dcae62" stroke="#c29247" stroke-width="0.6"/><rect x="0.5" y="8" width="15.5" height="7.8" fill="#dcae62" stroke="#c29247" stroke-width="0.6"/><line x1="8.25" y1="8" x2="8.25" y2="15.8" stroke="#c29247" stroke-width="0.6"/><rect x="7.9" y="0.5" width="0.9" height="2.6" fill="#8a6428"/><rect x="3.9" y="8" width="0.9" height="2.6" fill="#8a6428"/><rect x="5.6" y="5.6" width="1.4" height="1.4" fill="#9aa"/><rect x="1.6" y="13.4" width="1.4" height="1.4" fill="#9aa"/><circle cx="12" cy="12" r="4" fill="#7fbc4a"/><path d="M12 9.6v4.8M9.6 12h4.8" stroke="#e8f5dc" stroke-width="1.1"/></svg></div>
<div class="a" style="left:89px;top:388px;width:16px;height:16px"><svg width="16" height="16" viewBox="0 0 16 16"><rect x="4.5" y="0.5" width="7.5" height="7.5" fill="#dcae62" stroke="#c29247" stroke-width="0.6"/><rect x="0.5" y="8" width="15.5" height="7.8" fill="#dcae62" stroke="#c29247" stroke-width="0.6"/><line x1="8.25" y1="8" x2="8.25" y2="15.8" stroke="#c29247" stroke-width="0.6"/><rect x="7.9" y="0.5" width="0.9" height="2.6" fill="#8a6428"/><rect x="3.9" y="8" width="0.9" height="2.6" fill="#8a6428"/><rect x="5.6" y="5.6" width="1.4" height="1.4" fill="#9aa"/><rect x="1.6" y="13.4" width="1.4" height="1.4" fill="#9aa"/><path d="M9.3 9.3l5.4 5.4M14.7 9.3l-5.4 5.4" stroke="#a81a14" stroke-width="2.6"/></svg></div>
<div class="a" style="left:129px;top:388px;width:16px;height:16px"><svg width="16" height="16" viewBox="0 0 16 16"><circle cx="8" cy="8" r="8" fill="#8cc43e"/><path d="M8 3.3v9.4M3.3 8h9.4" stroke="#fff" stroke-width="2.3"/></svg></div>
<div class="a" style="left:169px;top:388px;width:16px;height:16px"><svg width="16" height="16" viewBox="0 0 16 16"><defs><linearGradient id="xg" x1="0" y1="0" x2="1" y2="1"><stop offset="0" stop-color="#a82a22"/><stop offset="1" stop-color="#941812"/></linearGradient></defs><path d="M1.8 1.8l12.4 12.4M14.2 1.8L1.8 14.2" stroke="url(#xg)" stroke-width="4.6"/></svg></div>
<div class="a" style="left:216px;top:388px;width:16px;height:16px"><svg width="16" height="16" viewBox="0 0 16 16"><rect x="4.7" y="0" width="6.6" height="4.8" fill="#c4c4c4"/><path d="M4.7 1.6h6.6M4.7 3.2h6.6" stroke="#fff" stroke-width="0.5" opacity="0.6"/><path d="M8 4.8v1.2L3 10.5M8 6l5 4.5" stroke="#999" stroke-width="0.9" fill="none"/><circle cx="3" cy="12.7" r="3.2" fill="#c8c8c8"/><circle cx="12.7" cy="12.7" r="3.2" fill="#c8c8c8"/><path d="M2 12l1.8 1.6M11.7 12l1.8 1.6" stroke="#888" stroke-width="0.6"/></svg></div>
<div class="a" style="left:258px;top:388px;width:16px;height:16px"><svg width="16" height="16" viewBox="0 0 16 16"><rect x="1" y="1.2" width="14" height="11" fill="#fff" stroke="#1a1a1a" stroke-width="1"/><path d="M1 1.5l7 5.3 7-5.3M1.2 12l5-4.5M14.8 12l-5-4.5" stroke="#333" stroke-width="0.8" fill="none"/><ellipse cx="6" cy="13.3" rx="2.5" ry="2" fill="none" stroke="#f0c23a" stroke-width="1.4"/><ellipse cx="11.5" cy="13.3" rx="2.5" ry="2" fill="none" stroke="#49b2e4" stroke-width="1.4"/><path d="M7.5 13.3h2.5" stroke="#888" stroke-width="1"/></svg></div>
<div class="a" style="left:288px;top:388px;width:16px;height:16px"><svg width="16" height="16" viewBox="0 0 16 16"><path d="M0.4 15.6C0.6 12.6 2.8 11.2 5.3 10.9L7.4 12.2 9.5 10.9C12 11.2 14.4 12.6 14.8 15.6z" fill="#3383cc"/><rect x="6" y="9" width="2.8" height="2.6" fill="#f0bc7c"/><ellipse cx="7.4" cy="6.2" rx="3.3" ry="3.9" fill="#f3c283"/><path d="M4.1 5.6C3.8 2.2 5.4 1 7.4 1s3.6 1.2 3.3 4.6C10.4 4 9.6 3.3 7.4 3.3S4.4 4 4.1 5.6z" fill="#17110c"/><path d="M11.3 14.6l4-4.8" stroke="#f0a050" stroke-width="2.1"/><path d="M14.6 10.6l1-1.2" stroke="#e8e8e8" stroke-width="2.1"/></svg></div>
<div class="a" style="left:326px;top:388px;width:16px;height:16px"><svg width="16" height="16" viewBox="0 0 16 16"><circle cx="8" cy="8" r="8" fill="#d9862c"/><path d="M8 3.3v9.4M3.3 8h9.4" stroke="#fff" stroke-width="2.3"/></svg></div>
<div class="a txt" style="left:367px;top:387px">4</div>
<div class="a txt" style="left:404px;top:387px">English</div>
<div class="a dbox" style="left:505px;top:389px;width:56px;height:17px"></div>
<div class="a txt" style="left:510px;top:387px">Mast...</div>
<div class="a dbox" style="left:571px;top:389px;width:171px;height:17px"></div>
<div class="a txt" style="left:576px;top:387px">Tech QC</div>
<div class="a" style="left:807px;top:388px;width:16px;height:16px"><svg width="16" height="16" viewBox="0 0 16 16" style="overflow:visible"><rect x="1.9" y="1.9" width="11.6" height="11.6" rx="2" fill="none" stroke="#f0c040" stroke-width="1.8"/><path d="M4.3 6.8L8.9 10.8L16.5 3.3" stroke="#58bdea" stroke-width="2.5" fill="none"/></svg></div>
<div class="a" style="left:903px;top:388px;width:16px;height:16px"><svg width="16" height="16" viewBox="0 0 16 16"><rect x="0.7" y="0.7" width="14.6" height="14.6" rx="3" fill="rgba(255,255,255,0.04)" stroke="#6a6a6a" stroke-width="1.3"/><path d="M3.8 3h5.5l2.9 2.9v7.3H3.8z" fill="none" stroke="#363636" stroke-width="1.1"/><path d="M4.8 7.8h6.4M4.8 9.9h6.4M4.8 12h6.4" stroke="#3a3a3a" stroke-width="0.8"/><path d="M5 4.5h2.5" stroke="#6a6a6a" stroke-width="0.7"/></svg></div>
<div class="a" style="left:973px;top:389px;width:16px;height:14px"><svg width="17" height="13" viewBox="0 0 17 13"><rect x="0" y="0.5" width="5.5" height="5.5" rx="1" fill="#d8904a"/><path d="M1.5 5.5l1.2-3.5 1.5 3.5" stroke="#3a2a1a" stroke-width="0.8" fill="none"/><rect x="5.5" y="0.5" width="5.5" height="5.5" rx="1" fill="#78c8ea"/><path d="M6.5 3h3.5M6.5 4.5h3.5" stroke="#333" stroke-width="0.6"/><rect x="11" y="0.5" width="5.5" height="5.5" rx="1" fill="#bcd878"/><path d="M12 5l3.5-3.5" stroke="#222" stroke-width="1.2"/><rect x="3" y="6.5" width="5.5" height="5.5" rx="1.5" fill="#a88ad0"/><circle cx="5.75" cy="9.25" r="1.5" fill="none" stroke="#7a5aa0" stroke-width="0.6"/><rect x="8.5" y="6.5" width="5.5" height="5.5" rx="1.5" fill="#e88880"/><rect x="9.8" y="7.8" width="3" height="2.6" rx="0.5" fill="#111"/></svg></div>
<div class="a dbox" style="left:1085px;top:389px;width:45px;height:17px"></div>
<div class="a dbox" style="left:1140px;top:389px;width:176px;height:17px"></div>
<div class="a dbox" style="left:1340px;top:389px;width:131px;height:17px"></div>
<div class="a" style="left:1508px;top:388px;width:16px;height:16px"><svg width="16" height="16" viewBox="0 0 16 16"><circle cx="8" cy="8" r="8" fill="#cdcdcd"/></svg></div>
<div class="a" style="left:1573px;top:388px;width:16px;height:16px"><svg width="16" height="16" viewBox="0 0 16 16"><path d="M0.8 15.2l2.6-2.6M12.6 3.4l2.6-2.6" stroke="#8cc04a" stroke-width="1.4"/><ellipse cx="8" cy="8" rx="6.6" ry="4.5" transform="rotate(-45 8 8)" fill="#9ccd5a"/><path d="M5.3 7.2l3.5 3.5" stroke="#7aaa3a" stroke-width="0.8"/></svg></div>
<div class="a" style="left:1624px;top:388px;width:16px;height:16px"><svg width="16" height="16" viewBox="0 0 16 16"><circle cx="8" cy="8" r="8" fill="#4a86d8"/><path d="M5.8 3.8v8.4l6.2-4.2z" fill="#fff"/></svg></div>
<div class="a" style="left:1665px;top:388px;width:16px;height:16px"><svg width="16" height="16" viewBox="0 0 16 16"><rect x="0.6" y="1.6" width="13.8" height="10.8" fill="#fff" stroke="#222" stroke-width="1.1"/><path d="M0.6 1.8l7 5 7-5M0.8 12.2l5-4.2M14.2 12.2l-5-4.2" stroke="#333" stroke-width="0.7" fill="none"/><circle cx="11.5" cy="11.5" r="4.3" fill="#b8b8b8" stroke="#ddd" stroke-width="0.6"/><path d="M9 11.5h4.3M11.6 9.6l2 1.9-2 1.9" stroke="#fff" stroke-width="1.3" fill="none"/></svg></div>
<div class="a dbox" style="left:1702px;top:384px;width:114px;height:25px;border-radius:9px"></div>
<div class="a" style="left:1702px;top:384px;width:120px;height:26px"><svg width="120" height="26" viewBox="0 0 120 26"><g stroke="#f2f2f2" stroke-width="1.2" fill="none"><path d="M10 19.4h12.6l5-11.2"/><path d="M27 19.4h12.8l5-11.2"/><path d="M44.5 19.4h23.7"/><path d="M71.2 19.4h12.5"/><path d="M86.1 19.4h12.7"/></g><rect x="84.2" y="11.2" width="1.6" height="1.6" fill="#f2f2f2"/><rect x="84.2" y="16.2" width="1.6" height="1.6" fill="#f2f2f2"/></svg></div>
<div class="a" style="left:1844px;top:388px;width:16px;height:16px"><svg width="16" height="16" viewBox="0 0 16 16"><circle cx="8" cy="8" r="8" fill="#8c8c8c"/></svg></div>
<div class="a" style="left:38px;top:417px;width:1826px;height:40px;background:#4c4c4c"></div>
<div class="a" style="left:48px;top:428px;width:16px;height:16px"><svg width="16" height="16" viewBox="0 0 16 16"><rect x="4.5" y="0.5" width="7.5" height="7.5" fill="#dcae62" stroke="#c29247" stroke-width="0.6"/><rect x="0.5" y="8" width="15.5" height="7.8" fill="#dcae62" stroke="#c29247" stroke-width="0.6"/><line x1="8.25" y1="8" x2="8.25" y2="15.8" stroke="#c29247" stroke-width="0.6"/><rect x="7.9" y="0.5" width="0.9" height="2.6" fill="#8a6428"/><rect x="3.9" y="8" width="0.9" height="2.6" fill="#8a6428"/><rect x="5.6" y="5.6" width="1.4" height="1.4" fill="#9aa"/><rect x="1.6" y="13.4" width="1.4" height="1.4" fill="#9aa"/><circle cx="12" cy="12" r="4" fill="#7fbc4a"/><path d="M12 9.6v4.8M9.6 12h4.8" stroke="#e8f5dc" stroke-width="1.1"/></svg></div>
<div class="a" style="left:89px;top:428px;width:16px;height:16px"><svg width="16" height="16" viewBox="0 0 16 16"><rect x="4.5" y="0.5" width="7.5" height="7.5" fill="#dcae62" stroke="#c29247" stroke-width="0.6"/><rect x="0.5" y="8" width="15.5" height="7.8" fill="#dcae62" stroke="#c29247" stroke-width="0.6"/><line x1="8.25" y1="8" x2="8.25" y2="15.8" stroke="#c29247" stroke-width="0.6"/><rect x="7.9" y="0.5" width="0.9" height="2.6" fill="#8a6428"/><rect x="3.9" y="8" width="0.9" height="2.6" fill="#8a6428"/><rect x="5.6" y="5.6" width="1.4" height="1.4" fill="#9aa"/><rect x="1.6" y="13.4" width="1.4" height="1.4" fill="#9aa"/><path d="M9.3 9.3l5.4 5.4M14.7 9.3l-5.4 5.4" stroke="#a81a14" stroke-width="2.6"/></svg></div>
<div class="a" style="left:129px;top:428px;width:16px;height:16px"><svg width="16" height="16" viewBox="0 0 16 16"><circle cx="8" cy="8" r="8" fill="#8cc43e"/><path d="M8 3.3v9.4M3.3 8h9.4" stroke="#fff" stroke-width="2.3"/></svg></div>
<div class="a" style="left:169px;top:428px;width:16px;height:16px"><svg width="16" height="16" viewBox="0 0 16 16"><defs><linearGradient id="xg" x1="0" y1="0" x2="1" y2="1"><stop offset="0" stop-color="#a82a22"/><stop offset="1" stop-color="#941812"/></linearGradient></defs><path d="M1.8 1.8l12.4 12.4M14.2 1.8L1.8 14.2" stroke="url(#xg)" stroke-width="4.6"/></svg></div>
<div class="a" style="left:216px;top:428px;width:16px;height:16px"><svg width="16" height="16" viewBox="0 0 16 16"><rect x="4.7" y="0" width="6.6" height="4.8" fill="#55b9e8"/><path d="M4.7 1.6h6.6M4.7 3.2h6.6" stroke="#fff" stroke-width="0.5" opacity="0.6"/><path d="M8 4.8v1.2L3 10.5M8 6l5 4.5" stroke="#999" stroke-width="0.9" fill="none"/><circle cx="3" cy="12.7" r="3.2" fill="#f2c431"/><circle cx="12.7" cy="12.7" r="3.2" fill="#f2c431"/><path d="M2 12l1.8 1.6M11.7 12l1.8 1.6" stroke="#888" stroke-width="0.6"/></svg></div>
<div class="a" style="left:258px;top:428px;width:16px;height:16px"><svg width="16" height="16" viewBox="0 0 16 16"><rect x="1" y="1.2" width="14" height="11" fill="#fff" stroke="#1a1a1a" stroke-width="1"/><path d="M1 1.5l7 5.3 7-5.3M1.2 12l5-4.5M14.8 12l-5-4.5" stroke="#333" stroke-width="0.8" fill="none"/><ellipse cx="6" cy="13.3" rx="2.5" ry="2" fill="none" stroke="#f0c23a" stroke-width="1.4"/><ellipse cx="11.5" cy="13.3" rx="2.5" ry="2" fill="none" stroke="#49b2e4" stroke-width="1.4"/><path d="M7.5 13.3h2.5" stroke="#888" stroke-width="1"/></svg></div>
<div class="a" style="left:288px;top:428px;width:16px;height:16px"><svg width="16" height="16" viewBox="0 0 16 16"><path d="M0.4 15.6C0.6 12.6 2.8 11.2 5.3 10.9L7.4 12.2 9.5 10.9C12 11.2 14.4 12.6 14.8 15.6z" fill="#3383cc"/><rect x="6" y="9" width="2.8" height="2.6" fill="#f0bc7c"/><ellipse cx="7.4" cy="6.2" rx="3.3" ry="3.9" fill="#f3c283"/><path d="M4.1 5.6C3.8 2.2 5.4 1 7.4 1s3.6 1.2 3.3 4.6C10.4 4 9.6 3.3 7.4 3.3S4.4 4 4.1 5.6z" fill="#17110c"/><path d="M11.3 14.6l4-4.8" stroke="#f0a050" stroke-width="2.1"/><path d="M14.6 10.6l1-1.2" stroke="#e8e8e8" stroke-width="2.1"/></svg></div>
<div class="a" style="left:326px;top:428px;width:16px;height:16px"><svg width="16" height="16" viewBox="0 0 16 16"><circle cx="8" cy="8" r="8" fill="#d9862c"/><path d="M8 3.3v9.4M3.3 8h9.4" stroke="#fff" stroke-width="2.3"/></svg></div>
<div class="a txt" style="left:367px;top:427px">5</div>
<div class="a txt" style="left:404px;top:427px">Portuguese</div>
<div class="a dbox" style="left:505px;top:429px;width:56px;height:17px"></div>
<div class="a txt" style="left:510px;top:427px">Subti...</div>
<div class="a dbox" style="left:571px;top:429px;width:171px;height:17px"></div>
<div class="a txt" style="left:576px;top:427px">Translation</div>
<div class="a" style="left:807px;top:428px;width:16px;height:16px"><svg width="16" height="16" viewBox="0 0 16 16" style="overflow:visible"><rect x="1.9" y="1.9" width="11.6" height="11.6" rx="2" fill="none" stroke="#f0c040" stroke-width="1.8"/><path d="M4.3 6.8L8.9 10.8L16.5 3.3" stroke="#58bdea" stroke-width="2.5" fill="none"/></svg></div>
<div class="a" style="left:903px;top:428px;width:16px;height:16px"><svg width="16" height="16" viewBox="0 0 16 16"><rect x="0.7" y="0.7" width="14.6" height="14.6" rx="3" fill="rgba(255,255,255,0.04)" stroke="#6a6a6a" stroke-width="1.3"/><path d="M3.5 7.5c0-2.5 1.5-4 4-4.2M12.5 8.5c0 2.5-1.5 4-4 4.2" stroke="#3a3a3a" stroke-width="1.6" fill="none"/><path d="M7 1.8l2.5 1.8-2.5 2zM9 14.2l-2.5-1.8 2.5-2z" fill="#3a3a3a"/><path d="M9.5 8.5h3.5v3.5" stroke="#3a3a3a" stroke-width="0.9" fill="none"/></svg></div>
<div class="a" style="left:973px;top:429px;width:16px;height:14px"><svg width="17" height="13" viewBox="0 0 17 13"><rect x="0" y="0.5" width="5.5" height="5.5" rx="1" fill="#d8904a"/><path d="M1.5 5.5l1.2-3.5 1.5 3.5" stroke="#3a2a1a" stroke-width="0.8" fill="none"/><rect x="5.5" y="0.5" width="5.5" height="5.5" rx="1" fill="#78c8ea"/><path d="M6.5 3h3.5M6.5 4.5h3.5" stroke="#333" stroke-width="0.6"/><rect x="11" y="0.5" width="5.5" height="5.5" rx="1" fill="#bcd878"/><path d="M12 5l3.5-3.5" stroke="#222" stroke-width="1.2"/><rect x="3" y="6.5" width="5.5" height="5.5" rx="1.5" fill="#a88ad0"/><circle cx="5.75" cy="9.25" r="1.5" fill="none" stroke="#7a5aa0" stroke-width="0.6"/><rect x="8.5" y="6.5" width="5.5" height="5.5" rx="1.5" fill="#e88880"/><rect x="9.8" y="7.8" width="3" height="2.6" rx="0.5" fill="#111"/></svg></div>
<div class="a dbox" style="left:1085px;top:429px;width:45px;height:17px"></div>
<div class="a dbox" style="left:1140px;top:429px;width:176px;height:17px"></div>
<div class="a dbox" style="left:1340px;top:429px;width:131px;height:17px"></div>
<div class="a" style="left:1508px;top:428px;width:16px;height:16px"><svg width="16" height="16" viewBox="0 0 16 16"><circle cx="8" cy="8" r="8" fill="#cdcdcd"/></svg></div>
<div class="a" style="left:1573px;top:428px;width:16px;height:16px"><svg width="16" height="16" viewBox="0 0 16 16"><path d="M0.8 15.2l2.6-2.6M12.6 3.4l2.6-2.6" stroke="#8cc04a" stroke-width="1.4"/><ellipse cx="8" cy="8" rx="6.6" ry="4.5" transform="rotate(-45 8 8)" fill="#9ccd5a"/><path d="M5.3 7.2l3.5 3.5" stroke="#7aaa3a" stroke-width="0.8"/></svg></div>
<div class="a" style="left:1624px;top:428px;width:16px;height:16px"><svg width="16" height="16" viewBox="0 0 16 16"><circle cx="8" cy="8" r="8" fill="#f6cc38"/><path d="M5.8 3.8v8.4l6.2-4.2z" fill="#6a5818"/></svg></div>
<div class="a" style="left:1665px;top:428px;width:16px;height:16px"><svg width="16" height="16" viewBox="0 0 16 16"><rect x="0.6" y="1.6" width="13.8" height="10.8" fill="#fff" stroke="#222" stroke-width="1.1"/><path d="M0.6 1.8l7 5 7-5M0.8 12.2l5-4.2M14.2 12.2l-5-4.2" stroke="#333" stroke-width="0.7" fill="none"/><circle cx="11.5" cy="11.5" r="4.3" fill="#b8b8b8" stroke="#ddd" stroke-width="0.6"/><path d="M9 11.5h4.3M11.6 9.6l2 1.9-2 1.9" stroke="#fff" stroke-width="1.3" fill="none"/></svg></div>
<div class="a dbox" style="left:1702px;top:424px;width:114px;height:25px;border-radius:9px"></div>
<div class="a" style="left:1702px;top:424px;width:120px;height:26px"><svg width="120" height="26" viewBox="0 0 120 26"><g stroke="#f2f2f2" stroke-width="1.2" fill="none"><path d="M10 19.4h12.6l5-11.2"/><path d="M27 19.4h12.8l5-11.2"/><path d="M44.5 19.4h23.7"/><path d="M71.2 19.4h12.5"/><path d="M86.1 19.4h12.7"/></g><rect x="84.2" y="11.2" width="1.6" height="1.6" fill="#f2f2f2"/><rect x="84.2" y="16.2" width="1.6" height="1.6" fill="#f2f2f2"/></svg></div>
<div class="a" style="left:1844px;top:428px;width:16px;height:16px"><svg width="16" height="16" viewBox="0 0 16 16"><circle cx="8" cy="8" r="8" fill="#8c8c8c"/></svg></div>
<div class="a" style="left:38px;top:457px;width:1826px;height:40px;background:#4c4c4c"></div>
<div class="a" style="left:48px;top:468px;width:16px;height:16px"><svg width="16" height="16" viewBox="0 0 16 16"><rect x="4.5" y="0.5" width="7.5" height="7.5" fill="#dcae62" stroke="#c29247" stroke-width="0.6"/><rect x="0.5" y="8" width="15.5" height="7.8" fill="#dcae62" stroke="#c29247" stroke-width="0.6"/><line x1="8.25" y1="8" x2="8.25" y2="15.8" stroke="#c29247" stroke-width="0.6"/><rect x="7.9" y="0.5" width="0.9" height="2.6" fill="#8a6428"/><rect x="3.9" y="8" width="0.9" height="2.6" fill="#8a6428"/><rect x="5.6" y="5.6" width="1.4" height="1.4" fill="#9aa"/><rect x="1.6" y="13.4" width="1.4" height="1.4" fill="#9aa"/><circle cx="12" cy="12" r="4" fill="#7fbc4a"/><path d="M12 9.6v4.8M9.6 12h4.8" stroke="#e8f5dc" stroke-width="1.1"/></svg></div>
<div class="a" style="left:129px;top:468px;width:16px;height:16px"><svg width="16" height="16" viewBox="0 0 16 16"><circle cx="8" cy="8" r="8" fill="#8cc43e"/><path d="M8 3.3v9.4M3.3 8h9.4" stroke="#fff" stroke-width="2.3"/></svg></div>
<div class="a" style="left:169px;top:468px;width:16px;height:16px"><svg width="16" height="16" viewBox="0 0 16 16"><defs><linearGradient id="xg" x1="0" y1="0" x2="1" y2="1"><stop offset="0" stop-color="#a82a22"/><stop offset="1" stop-color="#941812"/></linearGradient></defs><path d="M1.8 1.8l12.4 12.4M14.2 1.8L1.8 14.2" stroke="url(#xg)" stroke-width="4.6"/></svg></div>
<div class="a" style="left:216px;top:468px;width:16px;height:16px"><svg width="16" height="16" viewBox="0 0 16 16"><rect x="4.7" y="0" width="6.6" height="4.8" fill="#c4c4c4"/><path d="M4.7 1.6h6.6M4.7 3.2h6.6" stroke="#fff" stroke-width="0.5" opacity="0.6"/><path d="M8 4.8v1.2L3 10.5M8 6l5 4.5" stroke="#999" stroke-width="0.9" fill="none"/><circle cx="3" cy="12.7" r="3.2" fill="#c8c8c8"/><circle cx="12.7" cy="12.7" r="3.2" fill="#c8c8c8"/><path d="M2 12l1.8 1.6M11.7 12l1.8 1.6" stroke="#888" stroke-width="0.6"/></svg></div>
<div class="a" style="left:258px;top:468px;width:16px;height:16px"><svg width="16" height="16" viewBox="0 0 16 16"><rect x="1" y="1.2" width="14" height="11" fill="#fff" stroke="#1a1a1a" stroke-width="1"/><path d="M1 1.5l7 5.3 7-5.3M1.2 12l5-4.5M14.8 12l-5-4.5" stroke="#333" stroke-width="0.8" fill="none"/><ellipse cx="6" cy="13.3" rx="2.5" ry="2" fill="none" stroke="#f0c23a" stroke-width="1.4"/><ellipse cx="11.5" cy="13.3" rx="2.5" ry="2" fill="none" stroke="#49b2e4" stroke-width="1.4"/><path d="M7.5 13.3h2.5" stroke="#888" stroke-width="1"/></svg></div>
<div class="a" style="left:288px;top:468px;width:16px;height:16px"><svg width="16" height="16" viewBox="0 0 16 16"><path d="M0.4 15.6C0.6 12.6 2.8 11.2 5.3 10.9L7.4 12.2 9.5 10.9C12 11.2 14.4 12.6 14.8 15.6z" fill="#3383cc"/><rect x="6" y="9" width="2.8" height="2.6" fill="#f0bc7c"/><ellipse cx="7.4" cy="6.2" rx="3.3" ry="3.9" fill="#f3c283"/><path d="M4.1 5.6C3.8 2.2 5.4 1 7.4 1s3.6 1.2 3.3 4.6C10.4 4 9.6 3.3 7.4 3.3S4.4 4 4.1 5.6z" fill="#17110c"/><path d="M11.3 14.6l4-4.8" stroke="#f0a050" stroke-width="2.1"/><path d="M14.6 10.6l1-1.2" stroke="#e8e8e8" stroke-width="2.1"/></svg></div>
<div class="a" style="left:326px;top:468px;width:16px;height:16px"><svg width="16" height="16" viewBox="0 0 16 16"><circle cx="8" cy="8" r="8" fill="#d9862c"/><path d="M8 3.3v9.4M3.3 8h9.4" stroke="#fff" stroke-width="2.3"/></svg></div>
<div class="a txt" style="left:367px;top:467px">6</div>
<div class="a txt" style="left:404px;top:467px">Portuguese</div>
<div class="a dbox" style="left:505px;top:469px;width:56px;height:17px"></div>
<div class="a txt" style="left:510px;top:467px">Subti...</div>
<div class="a dbox" style="left:571px;top:469px;width:171px;height:17px"></div>
<div class="a txt" style="left:576px;top:467px">Editing Translation</div>
<div class="a" style="left:807px;top:468px;width:16px;height:16px"><svg width="16" height="16" viewBox="0 0 16 16" style="overflow:visible"><rect x="1.9" y="1.9" width="11.6" height="11.6" rx="2" fill="none" stroke="#f0c040" stroke-width="1.8"/><path d="M4.3 6.8L8.9 10.8L16.5 3.3" stroke="#58bdea" stroke-width="2.5" fill="none"/></svg></div>
<div class="a" style="left:903px;top:468px;width:16px;height:16px"><svg width="16" height="16" viewBox="0 0 16 16"><rect x="0.7" y="0.7" width="14.6" height="14.6" rx="3" fill="rgba(255,255,255,0.04)" stroke="#6a6a6a" stroke-width="1.3"/><path d="M3.8 3h5.5l2.9 2.9v7.3H3.8z" fill="none" stroke="#363636" stroke-width="1.1"/><path d="M4.8 7.8h6.4M4.8 9.9h6.4M4.8 12h6.4" stroke="#3a3a3a" stroke-width="0.8"/><path d="M5 4.5h2.5" stroke="#6a6a6a" stroke-width="0.7"/></svg></div>
<div class="a" style="left:973px;top:469px;width:16px;height:14px"><svg width="17" height="13" viewBox="0 0 17 13"><rect x="0" y="0.5" width="5.5" height="5.5" rx="1" fill="#d8904a"/><path d="M1.5 5.5l1.2-3.5 1.5 3.5" stroke="#3a2a1a" stroke-width="0.8" fill="none"/><rect x="5.5" y="0.5" width="5.5" height="5.5" rx="1" fill="#78c8ea"/><path d="M6.5 3h3.5M6.5 4.5h3.5" stroke="#333" stroke-width="0.6"/><rect x="11" y="0.5" width="5.5" height="5.5" rx="1" fill="#bcd878"/><path d="M12 5l3.5-3.5" stroke="#222" stroke-width="1.2"/><rect x="3" y="6.5" width="5.5" height="5.5" rx="1.5" fill="#a88ad0"/><circle cx="5.75" cy="9.25" r="1.5" fill="none" stroke="#7a5aa0" stroke-width="0.6"/><rect x="8.5" y="6.5" width="5.5" height="5.5" rx="1.5" fill="#e88880"/><rect x="9.8" y="7.8" width="3" height="2.6" rx="0.5" fill="#111"/></svg></div>
<div class="a dbox" style="left:1085px;top:469px;width:45px;height:17px"></div>
<div class="a dbox" style="left:1140px;top:469px;width:176px;height:17px"></div>
<div class="a dbox" style="left:1340px;top:469px;width:131px;height:17px"></div>
<div class="a" style="left:1508px;top:468px;width:16px;height:16px"><svg width="16" height="16" viewBox="0 0 16 16"><circle cx="8" cy="8" r="8" fill="#cdcdcd"/></svg></div>
<div class="a" style="left:1573px;top:468px;width:16px;height:16px"><svg width="16" height="16" viewBox="0 0 16 16"><path d="M0.8 15.2l2.6-2.6M12.6 3.4l2.6-2.6" stroke="#8cc04a" stroke-width="1.4"/><ellipse cx="8" cy="8" rx="6.6" ry="4.5" transform="rotate(-45 8 8)" fill="#9ccd5a"/><path d="M5.3 7.2l3.5 3.5" stroke="#7aaa3a" stroke-width="0.8"/></svg></div>
<div class="a" style="left:1624px;top:468px;width:16px;height:16px"><svg width="16" height="16" viewBox="0 0 16 16"><circle cx="8" cy="8" r="8" fill="#f6cc38"/><path d="M5.8 3.8v8.4l6.2-4.2z" fill="#6a5818"/></svg></div>
<div class="a" style="left:1665px;top:468px;width:16px;height:16px"><svg width="16" height="16" viewBox="0 0 16 16"><rect x="0.6" y="1.6" width="13.8" height="10.8" fill="#fff" stroke="#222" stroke-width="1.1"/><path d="M0.6 1.8l7 5 7-5M0.8 12.2l5-4.2M14.2 12.2l-5-4.2" stroke="#333" stroke-width="0.7" fill="none"/><circle cx="11.5" cy="11.5" r="4.3" fill="#b8b8b8" stroke="#ddd" stroke-width="0.6"/><path d="M9 11.5h4.3M11.6 9.6l2 1.9-2 1.9" stroke="#fff" stroke-width="1.3" fill="none"/></svg></div>
<div class="a dbox" style="left:1702px;top:464px;width:114px;height:25px;border-radius:9px"></div>
<div class="a" style="left:1702px;top:464px;width:120px;height:26px"><svg width="120" height="26" viewBox="0 0 120 26"><g stroke="#f2f2f2" stroke-width="1.2" fill="none"><path d="M10 19.4h12.6l5-11.2"/><path d="M27 19.4h12.8l5-11.2"/><path d="M44.5 19.4h23.7"/><path d="M71.2 19.4h12.5"/><path d="M86.1 19.4h12.7"/></g><rect x="84.2" y="11.2" width="1.6" height="1.6" fill="#f2f2f2"/><rect x="84.2" y="16.2" width="1.6" height="1.6" fill="#f2f2f2"/></svg></div>
<div class="a" style="left:1844px;top:468px;width:16px;height:16px"><svg width="16" height="16" viewBox="0 0 16 16"><circle cx="8" cy="8" r="8" fill="#8c8c8c"/></svg></div>
<div class="a" style="left:38px;top:497px;width:1826px;height:40px;background:#4c4c4c"></div>
<div class="a" style="left:48px;top:508px;width:16px;height:16px"><svg width="16" height="16" viewBox="0 0 16 16"><rect x="4.5" y="0.5" width="7.5" height="7.5" fill="#dcae62" stroke="#c29247" stroke-width="0.6"/><rect x="0.5" y="8" width="15.5" height="7.8" fill="#dcae62" stroke="#c29247" stroke-width="0.6"/><line x1="8.25" y1="8" x2="8.25" y2="15.8" stroke="#c29247" stroke-width="0.6"/><rect x="7.9" y="0.5" width="0.9" height="2.6" fill="#8a6428"/><rect x="3.9" y="8" width="0.9" height="2.6" fill="#8a6428"/><rect x="5.6" y="5.6" width="1.4" height="1.4" fill="#9aa"/><rect x="1.6" y="13.4" width="1.4" height="1.4" fill="#9aa"/><circle cx="12" cy="12" r="4" fill="#7fbc4a"/><path d="M12 9.6v4.8M9.6 12h4.8" stroke="#e8f5dc" stroke-width="1.1"/></svg></div>
<div class="a" style="left:129px;top:508px;width:16px;height:16px"><svg width="16" height="16" viewBox="0 0 16 16"><circle cx="8" cy="8" r="8" fill="#8cc43e"/><path d="M8 3.3v9.4M3.3 8h9.4" stroke="#fff" stroke-width="2.3"/></svg></div>
<div class="a" style="left:169px;top:508px;width:16px;height:16px"><svg width="16" height="16" viewBox="0 0 16 16"><defs><linearGradient id="xg" x1="0" y1="0" x2="1" y2="1"><stop offset="0" stop-color="#a82a22"/><stop offset="1" stop-color="#941812"/></linearGradient></defs><path d="M1.8 1.8l12.4 12.4M14.2 1.8L1.8 14.2" stroke="url(#xg)" stroke-width="4.6"/></svg></div>
<div class="a" style="left:216px;top:508px;width:16px;height:16px"><svg width="16" height="16" viewBox="0 0 16 16"><rect x="4.7" y="0" width="6.6" height="4.8" fill="#55b9e8"/><path d="M4.7 1.6h6.6M4.7 3.2h6.6" stroke="#fff" stroke-width="0.5" opacity="0.6"/><path d="M8 4.8v1.2L3 10.5M8 6l5 4.5" stroke="#999" stroke-width="0.9" fill="none"/><circle cx="3" cy="12.7" r="3.2" fill="#f2c431"/><circle cx="12.7" cy="12.7" r="3.2" fill="#f2c431"/><path d="M2 12l1.8 1.6M11.7 12l1.8 1.6" stroke="#888" stroke-width="0.6"/></svg></div>
<div class="a" style="left:258px;top:508px;width:16px;height:16px"><svg width="16" height="16" viewBox="0 0 16 16"><rect x="1" y="1.2" width="14" height="11" fill="#fff" stroke="#1a1a1a" stroke-width="1"/><path d="M1 1.5l7 5.3 7-5.3M1.2 12l5-4.5M14.8 12l-5-4.5" stroke="#333" stroke-width="0.8" fill="none"/><ellipse cx="6" cy="13.3" rx="2.5" ry="2" fill="none" stroke="#f0c23a" stroke-width="1.4"/><ellipse cx="11.5" cy="13.3" rx="2.5" ry="2" fill="none" stroke="#49b2e4" stroke-width="1.4"/><path d="M7.5 13.3h2.5" stroke="#888" stroke-width="1"/></svg></div>
<div class="a" style="left:288px;top:508px;width:16px;height:16px"><svg width="16" height="16" viewBox="0 0 16 16"><path d="M0.4 15.6C0.6 12.6 2.8 11.2 5.3 10.9L7.4 12.2 9.5 10.9C12 11.2 14.4 12.6 14.8 15.6z" fill="#3383cc"/><rect x="6" y="9" width="2.8" height="2.6" fill="#f0bc7c"/><ellipse cx="7.4" cy="6.2" rx="3.3" ry="3.9" fill="#f3c283"/><path d="M4.1 5.6C3.8 2.2 5.4 1 7.4 1s3.6 1.2 3.3 4.6C10.4 4 9.6 3.3 7.4 3.3S4.4 4 4.1 5.6z" fill="#17110c"/><path d="M11.3 14.6l4-4.8" stroke="#f0a050" stroke-width="2.1"/><path d="M14.6 10.6l1-1.2" stroke="#e8e8e8" stroke-width="2.1"/></svg></div>
<div class="a" style="left:326px;top:508px;width:16px;height:16px"><svg width="16" height="16" viewBox="0 0 16 16"><circle cx="8" cy="8" r="8" fill="#d9862c"/><path d="M8 3.3v9.4M3.3 8h9.4" stroke="#fff" stroke-width="2.3"/></svg></div>
<div class="a txt" style="left:367px;top:507px">7</div>
<div class="a txt" style="left:404px;top:507px">Portuguese</div>
<div class="a dbox" style="left:505px;top:509px;width:56px;height:17px"></div>
<div class="a txt" style="left:510px;top:507px">Subti...</div>
<div class="a dbox" style="left:571px;top:509px;width:171px;height:17px"></div>
<div class="a txt" style="left:576px;top:507px">QC</div>
<div class="a" style="left:807px;top:508px;width:16px;height:16px"><svg width="16" height="16" viewBox="0 0 16 16" style="overflow:visible"><rect x="1.9" y="1.9" width="11.6" height="11.6" rx="2" fill="none" stroke="#f0c040" stroke-width="1.8"/><path d="M4.3 6.8L8.9 10.8L16.5 3.3" stroke="#58bdea" stroke-width="2.5" fill="none"/></svg></div>
<div class="a" style="left:903px;top:508px;width:16px;height:16px"><svg width="16" height="16" viewBox="0 0 16 16"><rect x="0.7" y="0.7" width="14.6" height="14.6" rx="3" fill="rgba(255,255,255,0.04)" stroke="#6a6a6a" stroke-width="1.3"/><path d="M3.8 3h5.5l2.9 2.9v7.3H3.8z" fill="none" stroke="#363636" stroke-width="1.1"/><path d="M4.8 7.8h6.4M4.8 9.9h6.4M4.8 12h6.4" stroke="#3a3a3a" stroke-width="0.8"/><path d="M5 4.5h2.5" stroke="#6a6a6a" stroke-width="0.7"/></svg></div>
<div class="a" style="left:973px;top:509px;width:16px;height:14px"><svg width="17" height="13" viewBox="0 0 17 13"><rect x="0" y="0.5" width="5.5" height="5.5" rx="1" fill="#d8904a"/><path d="M1.5 5.5l1.2-3.5 1.5 3.5" stroke="#3a2a1a" stroke-width="0.8" fill="none"/><rect x="5.5" y="0.5" width="5.5" height="5.5" rx="1" fill="#78c8ea"/><path d="M6.5 3h3.5M6.5 4.5h3.5" stroke="#333" stroke-width="0.6"/><rect x="11" y="0.5" width="5.5" height="5.5" rx="1" fill="#bcd878"/><path d="M12 5l3.5-3.5" stroke="#222" stroke-width="1.2"/><rect x="3" y="6.5" width="5.5" height="5.5" rx="1.5" fill="#a88ad0"/><circle cx="5.75" cy="9.25" r="1.5" fill="none" stroke="#7a5aa0" stroke-width="0.6"/><rect x="8.5" y="6.5" width="5.5" height="5.5" rx="1.5" fill="#e88880"/><rect x="9.8" y="7.8" width="3" height="2.6" rx="0.5" fill="#111"/></svg></div>
<div class="a dbox" style="left:1085px;top:509px;width:45px;height:17px"></div>
<div class="a dbox" style="left:1140px;top:509px;width:176px;height:17px"></div>
<div class="a dbox" style="left:1340px;top:509px;width:131px;height:17px"></div>
<div class="a" style="left:1508px;top:508px;width:16px;height:16px"><svg width="16" height="16" viewBox="0 0 16 16"><circle cx="8" cy="8" r="8" fill="#cdcdcd"/></svg></div>
<div class="a" style="left:1573px;top:508px;width:16px;height:16px"><svg width="16" height="16" viewBox="0 0 16 16"><path d="M0.8 15.2l2.6-2.6M12.6 3.4l2.6-2.6" stroke="#8cc04a" stroke-width="1.4"/><ellipse cx="8" cy="8" rx="6.6" ry="4.5" transform="rotate(-45 8 8)" fill="#9ccd5a"/><path d="M5.3 7.2l3.5 3.5" stroke="#7aaa3a" stroke-width="0.8"/></svg></div>
<div class="a" style="left:1624px;top:508px;width:16px;height:16px"><svg width="16" height="16" viewBox="0 0 16 16"><circle cx="8" cy="8" r="8" fill="#f6cc38"/><path d="M5.8 3.8v8.4l6.2-4.2z" fill="#6a5818"/></svg></div>
<div class="a" style="left:1665px;top:508px;width:16px;height:16px"><svg width="16" height="16" viewBox="0 0 16 16"><rect x="0.6" y="1.6" width="13.8" height="10.8" fill="#fff" stroke="#222" stroke-width="1.1"/><path d="M0.6 1.8l7 5 7-5M0.8 12.2l5-4.2M14.2 12.2l-5-4.2" stroke="#333" stroke-width="0.7" fill="none"/><circle cx="11.5" cy="11.5" r="4.3" fill="#b8b8b8" stroke="#ddd" stroke-width="0.6"/><path d="M9 11.5h4.3M11.6 9.6l2 1.9-2 1.9" stroke="#fff" stroke-width="1.3" fill="none"/></svg></div>
<div class="a dbox" style="left:1702px;top:504px;width:114px;height:25px;border-radius:9px"></div>
<div class="a" style="left:1702px;top:504px;width:120px;height:26px"><svg width="120" height="26" viewBox="0 0 120 26"><g stroke="#f2f2f2" stroke-width="1.2" fill="none"><path d="M10 19.4h12.6l5-11.2"/><path d="M27 19.4h12.8l5-11.2"/><path d="M44.5 19.4h23.7"/><path d="M71.2 19.4h12.5"/><path d="M86.1 19.4h12.7"/></g><rect x="84.2" y="11.2" width="1.6" height="1.6" fill="#f2f2f2"/><rect x="84.2" y="16.2" width="1.6" height="1.6" fill="#f2f2f2"/></svg></div>
<div class="a" style="left:1844px;top:508px;width:16px;height:16px"><svg width="16" height="16" viewBox="0 0 16 16"><circle cx="8" cy="8" r="8" fill="#8c8c8c"/></svg></div>
<div class="a" style="left:38px;top:537px;width:1826px;height:40px;background:#5a5a5a"></div>
<div class="a" style="left:48px;top:548px;width:16px;height:16px"><svg width="16" height="16" viewBox="0 0 16 16"><rect x="4.5" y="0.5" width="7.5" height="7.5" fill="#dcae62" stroke="#c29247" stroke-width="0.6"/><rect x="0.5" y="8" width="15.5" height="7.8" fill="#dcae62" stroke="#c29247" stroke-width="0.6"/><line x1="8.25" y1="8" x2="8.25" y2="15.8" stroke="#c29247" stroke-width="0.6"/><rect x="7.9" y="0.5" width="0.9" height="2.6" fill="#8a6428"/><rect x="3.9" y="8" width="0.9" height="2.6" fill="#8a6428"/><rect x="5.6" y="5.6" width="1.4" height="1.4" fill="#9aa"/><rect x="1.6" y="13.4" width="1.4" height="1.4" fill="#9aa"/><circle cx="12" cy="12" r="4" fill="#7fbc4a"/><path d="M12 9.6v4.8M9.6 12h4.8" stroke="#e8f5dc" stroke-width="1.1"/></svg></div>
<div class="a" style="left:89px;top:548px;width:16px;height:16px"><svg width="16" height="16" viewBox="0 0 16 16"><rect x="4.5" y="0.5" width="7.5" height="7.5" fill="#dcae62" stroke="#c29247" stroke-width="0.6"/><rect x="0.5" y="8" width="15.5" height="7.8" fill="#dcae62" stroke="#c29247" stroke-width="0.6"/><line x1="8.25" y1="8" x2="8.25" y2="15.8" stroke="#c29247" stroke-width="0.6"/><rect x="7.9" y="0.5" width="0.9" height="2.6" fill="#8a6428"/><rect x="3.9" y="8" width="0.9" height="2.6" fill="#8a6428"/><rect x="5.6" y="5.6" width="1.4" height="1.4" fill="#9aa"/><rect x="1.6" y="13.4" width="1.4" height="1.4" fill="#9aa"/><path d="M9.3 9.3l5.4 5.4M14.7 9.3l-5.4 5.4" stroke="#a81a14" stroke-width="2.6"/></svg></div>
<div class="a" style="left:129px;top:548px;width:16px;height:16px"><svg width="16" height="16" viewBox="0 0 16 16"><circle cx="8" cy="8" r="8" fill="#8cc43e"/><path d="M8 3.3v9.4M3.3 8h9.4" stroke="#fff" stroke-width="2.3"/></svg></div>
<div class="a" style="left:169px;top:548px;width:16px;height:16px"><svg width="16" height="16" viewBox="0 0 16 16"><defs><linearGradient id="xg" x1="0" y1="0" x2="1" y2="1"><stop offset="0" stop-color="#a82a22"/><stop offset="1" stop-color="#941812"/></linearGradient></defs><path d="M1.8 1.8l12.4 12.4M14.2 1.8L1.8 14.2" stroke="url(#xg)" stroke-width="4.6"/></svg></div>
<div class="a" style="left:216px;top:548px;width:16px;height:16px"><svg width="16" height="16" viewBox="0 0 16 16"><rect x="4.7" y="0" width="6.6" height="4.8" fill="#55b9e8"/><path d="M4.7 1.6h6.6M4.7 3.2h6.6" stroke="#fff" stroke-width="0.5" opacity="0.6"/><path d="M8 4.8v1.2L3 10.5M8 6l5 4.5" stroke="#999" stroke-width="0.9" fill="none"/><circle cx="3" cy="12.7" r="3.2" fill="#f2c431"/><circle cx="12.7" cy="12.7" r="3.2" fill="#f2c431"/><path d="M2 12l1.8 1.6M11.7 12l1.8 1.6" stroke="#888" stroke-width="0.6"/></svg></div>
<div class="a" style="left:258px;top:548px;width:16px;height:16px"><svg width="16" height="16" viewBox="0 0 16 16"><rect x="1" y="1.2" width="14" height="11" fill="#fff" stroke="#1a1a1a" stroke-width="1"/><path d="M1 1.5l7 5.3 7-5.3M1.2 12l5-4.5M14.8 12l-5-4.5" stroke="#333" stroke-width="0.8" fill="none"/><ellipse cx="6" cy="13.3" rx="2.5" ry="2" fill="none" stroke="#f0c23a" stroke-width="1.4"/><ellipse cx="11.5" cy="13.3" rx="2.5" ry="2" fill="none" stroke="#49b2e4" stroke-width="1.4"/><path d="M7.5 13.3h2.5" stroke="#888" stroke-width="1"/></svg></div>
<div class="a" style="left:288px;top:548px;width:16px;height:16px"><svg width="16" height="16" viewBox="0 0 16 16"><path d="M0.4 15.6C0.6 12.6 2.8 11.2 5.3 10.9L7.4 12.2 9.5 10.9C12 11.2 14.4 12.6 14.8 15.6z" fill="#3383cc"/><rect x="6" y="9" width="2.8" height="2.6" fill="#f0bc7c"/><ellipse cx="7.4" cy="6.2" rx="3.3" ry="3.9" fill="#f3c283"/><path d="M4.1 5.6C3.8 2.2 5.4 1 7.4 1s3.6 1.2 3.3 4.6C10.4 4 9.6 3.3 7.4 3.3S4.4 4 4.1 5.6z" fill="#17110c"/><path d="M11.3 14.6l4-4.8" stroke="#f0a050" stroke-width="2.1"/><path d="M14.6 10.6l1-1.2" stroke="#e8e8e8" stroke-width="2.1"/></svg></div>
<div class="a" style="left:326px;top:548px;width:16px;height:16px"><svg width="16" height="16" viewBox="0 0 16 16"><circle cx="8" cy="8" r="8" fill="#d9862c"/><path d="M8 3.3v9.4M3.3 8h9.4" stroke="#fff" stroke-width="2.3"/></svg></div>
<div class="a txt" style="left:367px;top:547px">8</div>
<div class="a txt" style="left:404px;top:547px">French</div>
<div class="a dbox" style="left:505px;top:549px;width:56px;height:17px"></div>
<div class="a txt" style="left:510px;top:547px">Subti...</div>
<div class="a dbox" style="left:571px;top:549px;width:171px;height:17px"></div>
<div class="a txt" style="left:576px;top:547px">Translation</div>
<div class="a" style="left:807px;top:548px;width:16px;height:16px"><svg width="16" height="16" viewBox="0 0 16 16" style="overflow:visible"><rect x="1.9" y="1.9" width="11.6" height="11.6" rx="2" fill="none" stroke="#f0c040" stroke-width="1.8"/><path d="M4.3 6.8L8.9 10.8L16.5 3.3" stroke="#58bdea" stroke-width="2.5" fill="none"/></svg></div>
<div class="a" style="left:903px;top:548px;width:16px;height:16px"><svg width="16" height="16" viewBox="0 0 16 16"><rect x="0.7" y="0.7" width="14.6" height="14.6" rx="3" fill="rgba(255,255,255,0.04)" stroke="#6a6a6a" stroke-width="1.3"/><path d="M3.5 7.5c0-2.5 1.5-4 4-4.2M12.5 8.5c0 2.5-1.5 4-4 4.2" stroke="#3a3a3a" stroke-width="1.6" fill="none"/><path d="M7 1.8l2.5 1.8-2.5 2zM9 14.2l-2.5-1.8 2.5-2z" fill="#3a3a3a"/><path d="M9.5 8.5h3.5v3.5" stroke="#3a3a3a" stroke-width="0.9" fill="none"/></svg></div>
<div class="a" style="left:973px;top:549px;width:16px;height:14px"><svg width="17" height="13" viewBox="0 0 17 13"><rect x="0" y="0.5" width="5.5" height="5.5" rx="1" fill="#d8904a"/><path d="M1.5 5.5l1.2-3.5 1.5 3.5" stroke="#3a2a1a" stroke-width="0.8" fill="none"/><rect x="5.5" y="0.5" width="5.5" height="5.5" rx="1" fill="#78c8ea"/><path d="M6.5 3h3.5M6.5 4.5h3.5" stroke="#333" stroke-width="0.6"/><rect x="11" y="0.5" width="5.5" height="5.5" rx="1" fill="#bcd878"/><path d="M12 5l3.5-3.5" stroke="#222" stroke-width="1.2"/><rect x="3" y="6.5" width="5.5" height="5.5" rx="1.5" fill="#a88ad0"/><circle cx="5.75" cy="9.25" r="1.5" fill="none" stroke="#7a5aa0" stroke-width="0.6"/><rect x="8.5" y="6.5" width="5.5" height="5.5" rx="1.5" fill="#e88880"/><rect x="9.8" y="7.8" width="3" height="2.6" rx="0.5" fill="#111"/></svg></div>
<div class="a dbox" style="left:1085px;top:549px;width:45px;height:17px"></div>
<div class="a dbox" style="left:1140px;top:549px;width:176px;height:17px"></div>
<div class="a dbox" style="left:1340px;top:549px;width:131px;height:17px"></div>
<div class="a" style="left:1508px;top:548px;width:16px;height:16px"><svg width="16" height="16" viewBox="0 0 16 16"><circle cx="8" cy="8" r="8" fill="#cdcdcd"/></svg></div>
<div class="a" style="left:1573px;top:548px;width:16px;height:16px"><svg width="16" height="16" viewBox="0 0 16 16"><path d="M0.8 15.2l2.6-2.6M12.6 3.4l2.6-2.6" stroke="#8cc04a" stroke-width="1.4"/><ellipse cx="8" cy="8" rx="6.6" ry="4.5" transform="rotate(-45 8 8)" fill="#9ccd5a"/><path d="M5.3 7.2l3.5 3.5" stroke="#7aaa3a" stroke-width="0.8"/></svg></div>
<div class="a" style="left:1624px;top:548px;width:16px;height:16px"><svg width="16" height="16" viewBox="0 0 16 16"><circle cx="8" cy="8" r="8" fill="#f6cc38"/><path d="M5.8 3.8v8.4l6.2-4.2z" fill="#6a5818"/></svg></div>
<div class="a" style="left:1665px;top:548px;width:16px;height:16px"><svg width="16" height="16" viewBox="0 0 16 16"><rect x="0.6" y="1.6" width="13.8" height="10.8" fill="#fff" stroke="#222" stroke-width="1.1"/><path d="M0.6 1.8l7 5 7-5M0.8 12.2l5-4.2M14.2 12.2l-5-4.2" stroke="#333" stroke-width="0.7" fill="none"/><circle cx="11.5" cy="11.5" r="4.3" fill="#b8b8b8" stroke="#ddd" stroke-width="0.6"/><path d="M9 11.5h4.3M11.6 9.6l2 1.9-2 1.9" stroke="#fff" stroke-width="1.3" fill="none"/></svg></div>
<div class="a dbox" style="left:1702px;top:544px;width:114px;height:25px;border-radius:9px"></div>
<div class="a" style="left:1702px;top:544px;width:120px;height:26px"><svg width="120" height="26" viewBox="0 0 120 26"><g stroke="#f2f2f2" stroke-width="1.2" fill="none"><path d="M10 19.4h12.6l5-11.2"/><path d="M27 19.4h12.8l5-11.2"/><path d="M44.5 19.4h23.7"/><path d="M71.2 19.4h12.5"/><path d="M86.1 19.4h12.7"/></g><rect x="84.2" y="11.2" width="1.6" height="1.6" fill="#f2f2f2"/><rect x="84.2" y="16.2" width="1.6" height="1.6" fill="#f2f2f2"/></svg></div>
<div class="a" style="left:1844px;top:548px;width:16px;height:16px"><svg width="16" height="16" viewBox="0 0 16 16"><circle cx="8" cy="8" r="8" fill="#8c8c8c"/></svg></div>
<div class="a" style="left:38px;top:577px;width:1826px;height:40px;background:#5a5a5a"></div>
<div class="a" style="left:48px;top:588px;width:16px;height:16px"><svg width="16" height="16" viewBox="0 0 16 16"><rect x="4.5" y="0.5" width="7.5" height="7.5" fill="#dcae62" stroke="#c29247" stroke-width="0.6"/><rect x="0.5" y="8" width="15.5" height="7.8" fill="#dcae62" stroke="#c29247" stroke-width="0.6"/><line x1="8.25" y1="8" x2="8.25" y2="15.8" stroke="#c29247" stroke-width="0.6"/><rect x="7.9" y="0.5" width="0.9" height="2.6" fill="#8a6428"/><rect x="3.9" y="8" width="0.9" height="2.6" fill="#8a6428"/><rect x="5.6" y="5.6" width="1.4" height="1.4" fill="#9aa"/><rect x="1.6" y="13.4" width="1.4" height="1.4" fill="#9aa"/><circle cx="12" cy="12" r="4" fill="#7fbc4a"/><path d="M12 9.6v4.8M9.6 12h4.8" stroke="#e8f5dc" stroke-width="1.1"/></svg></div>
<div class="a" style="left:129px;top:588px;width:16px;height:16px"><svg width="16" height="16" viewBox="0 0 16 16"><circle cx="8" cy="8" r="8" fill="#8cc43e"/><path d="M8 3.3v9.4M3.3 8h9.4" stroke="#fff" stroke-width="2.3"/></svg></div>
<div class="a" style="left:169px;top:588px;width:16px;height:16px"><svg width="16" height="16" viewBox="0 0 16 16"><defs><linearGradient id="xg" x1="0" y1="0" x2="1" y2="1"><stop offset="0" stop-color="#a82a22"/><stop offset="1" stop-color="#941812"/></linearGradient></defs><path d="M1.8 1.8l12.4 12.4M14.2 1.8L1.8 14.2" stroke="url(#xg)" stroke-width="4.6"/></svg></div>
<div class="a" style="left:216px;top:588px;width:16px;height:16px"><svg width="16" height="16" viewBox="0 0 16 16"><rect x="4.7" y="0" width="6.6" height="4.8" fill="#c4c4c4"/><path d="M4.7 1.6h6.6M4.7 3.2h6.6" stroke="#fff" stroke-width="0.5" opacity="0.6"/><path d="M8 4.8v1.2L3 10.5M8 6l5 4.5" stroke="#999" stroke-width="0.9" fill="none"/><circle cx="3" cy="12.7" r="3.2" fill="#c8c8c8"/><circle cx="12.7" cy="12.7" r="3.2" fill="#c8c8c8"/><path d="M2 12l1.8 1.6M11.7 12l1.8 1.6" stroke="#888" stroke-width="0.6"/></svg></div>
<div class="a" style="left:258px;top:588px;width:16px;height:16px"><svg width="16" height="16" viewBox="0 0 16 16"><rect x="1" y="1.2" width="14" height="11" fill="#fff" stroke="#1a1a1a" stroke-width="1"/><path d="M1 1.5l7 5.3 7-5.3M1.2 12l5-4.5M14.8 12l-5-4.5" stroke="#333" stroke-width="0.8" fill="none"/><ellipse cx="6" cy="13.3" rx="2.5" ry="2" fill="none" stroke="#f0c23a" stroke-width="1.4"/><ellipse cx="11.5" cy="13.3" rx="2.5" ry="2" fill="none" stroke="#49b2e4" stroke-width="1.4"/><path d="M7.5 13.3h2.5" stroke="#888" stroke-width="1"/></svg></div>
<div class="a" style="left:288px;top:588px;width:16px;height:16px"><svg width="16" height="16" viewBox="0 0 16 16"><path d="M0.4 15.6C0.6 12.6 2.8 11.2 5.3 10.9L7.4 12.2 9.5 10.9C12 11.2 14.4 12.6 14.8 15.6z" fill="#3383cc"/><rect x="6" y="9" width="2.8" height="2.6" fill="#f0bc7c"/><ellipse cx="7.4" cy="6.2" rx="3.3" ry="3.9" fill="#f3c283"/><path d="M4.1 5.6C3.8 2.2 5.4 1 7.4 1s3.6 1.2 3.3 4.6C10.4 4 9.6 3.3 7.4 3.3S4.4 4 4.1 5.6z" fill="#17110c"/><path d="M11.3 14.6l4-4.8" stroke="#f0a050" stroke-width="2.1"/><path d="M14.6 10.6l1-1.2" stroke="#e8e8e8" stroke-width="2.1"/></svg></div>
<div class="a" style="left:326px;top:588px;width:16px;height:16px"><svg width="16" height="16" viewBox="0 0 16 16"><circle cx="8" cy="8" r="8" fill="#d9862c"/><path d="M8 3.3v9.4M3.3 8h9.4" stroke="#fff" stroke-width="2.3"/></svg></div>
<div class="a txt" style="left:367px;top:587px">9</div>
<div class="a txt" style="left:404px;top:587px">French</div>
<div class="a dbox" style="left:505px;top:589px;width:56px;height:17px"></div>
<div class="a txt" style="left:510px;top:587px">Subti...</div>
<div class="a dbox" style="left:571px;top:589px;width:171px;height:17px"></div>
<div class="a txt" style="left:576px;top:587px">Editing Translation</div>
<div class="a" style="left:807px;top:588px;width:16px;height:16px"><svg width="16" height="16" viewBox="0 0 16 16" style="overflow:visible"><rect x="1.9" y="1.9" width="11.6" height="11.6" rx="2" fill="none" stroke="#f0c040" stroke-width="1.8"/><path d="M4.3 6.8L8.9 10.8L16.5 3.3" stroke="#58bdea" stroke-width="2.5" fill="none"/></svg></div>
<div class="a" style="left:903px;top:588px;width:16px;height:16px"><svg width="16" height="16" viewBox="0 0 16 16"><rect x="0.7" y="0.7" width="14.6" height="14.6" rx="3" fill="rgba(255,255,255,0.04)" stroke="#6a6a6a" stroke-width="1.3"/><path d="M3.8 3h5.5l2.9 2.9v7.3H3.8z" fill="none" stroke="#363636" stroke-width="1.1"/><path d="M4.8 7.8h6.4M4.8 9.9h6.4M4.8 12h6.4" stroke="#3a3a3a" stroke-width="0.8"/><path d="M5 4.5h2.5" stroke="#6a6a6a" stroke-width="0.7"/></svg></div>
<div class="a" style="left:973px;top:589px;width:16px;height:14px"><svg width="17" height="13" viewBox="0 0 17 13"><rect x="0" y="0.5" width="5.5" height="5.5" rx="1" fill="#d8904a"/><path d="M1.5 5.5l1.2-3.5 1.5 3.5" stroke="#3a2a1a" stroke-width="0.8" fill="none"/><rect x="5.5" y="0.5" width="5.5" height="5.5" rx="1" fill="#78c8ea"/><path d="M6.5 3h3.5M6.5 4.5h3.5" stroke="#333" stroke-width="0.6"/><rect x="11" y="0.5" width="5.5" height="5.5" rx="1" fill="#bcd878"/><path d="M12 5l3.5-3.5" stroke="#222" stroke-width="1.2"/><rect x="3" y="6.5" width="5.5" height="5.5" rx="1.5" fill="#a88ad0"/><circle cx="5.75" cy="9.25" r="1.5" fill="none" stroke="#7a5aa0" stroke-width="0.6"/><rect x="8.5" y="6.5" width="5.5" height="5.5" rx="1.5" fill="#e88880"/><rect x="9.8" y="7.8" width="3" height="2.6" rx="0.5" fill="#111"/></svg></div>
<div class="a dbox" style="left:1085px;top:589px;width:45px;height:17px"></div>
<div class="a dbox" style="left:1140px;top:589px;width:176px;height:17px"></div>
<div class="a dbox" style="left:1340px;top:589px;width:131px;height:17px"></div>
<div class="a" style="left:1508px;top:588px;width:16px;height:16px"><svg width="16" height="16" viewBox="0 0 16 16"><circle cx="8" cy="8" r="8" fill="#cdcdcd"/></svg></div>
<div class="a" style="left:1573px;top:588px;width:16px;height:16px"><svg width="16" height="16" viewBox="0 0 16 16"><path d="M0.8 15.2l2.6-2.6M12.6 3.4l2.6-2.6" stroke="#8cc04a" stroke-width="1.4"/><ellipse cx="8" cy="8" rx="6.6" ry="4.5" transform="rotate(-45 8 8)" fill="#9ccd5a"/><path d="M5.3 7.2l3.5 3.5" stroke="#7aaa3a" stroke-width="0.8"/></svg></div>
<div class="a" style="left:1624px;top:588px;width:16px;height:16px"><svg width="16" height="16" viewBox="0 0 16 16"><circle cx="8" cy="8" r="8" fill="#f6cc38"/><path d="M5.8 3.8v8.4l6.2-4.2z" fill="#6a5818"/></svg></div>
<div class="a" style="left:1665px;top:588px;width:16px;height:16px"><svg width="16" height="16" viewBox="0 0 16 16"><rect x="0.6" y="1.6" width="13.8" height="10.8" fill="#fff" stroke="#222" stroke-width="1.1"/><path d="M0.6 1.8l7 5 7-5M0.8 12.2l5-4.2M14.2 12.2l-5-4.2" stroke="#333" stroke-width="0.7" fill="none"/><circle cx="11.5" cy="11.5" r="4.3" fill="#b8b8b8" stroke="#ddd" stroke-width="0.6"/><path d="M9 11.5h4.3M11.6 9.6l2 1.9-2 1.9" stroke="#fff" stroke-width="1.3" fill="none"/></svg></div>
<div class="a dbox" style="left:1702px;top:584px;width:114px;height:25px;border-radius:9px"></div>
<div class="a" style="left:1702px;top:584px;width:120px;height:26px"><svg width="120" height="26" viewBox="0 0 120 26"><g stroke="#f2f2f2" stroke-width="1.2" fill="none"><path d="M10 19.4h12.6l5-11.2"/><path d="M27 19.4h12.8l5-11.2"/><path d="M44.5 19.4h23.7"/><path d="M71.2 19.4h12.5"/><path d="M86.1 19.4h12.7"/></g><rect x="84.2" y="11.2" width="1.6" height="1.6" fill="#f2f2f2"/><rect x="84.2" y="16.2" width="1.6" height="1.6" fill="#f2f2f2"/></svg></div>
<div class="a" style="left:1844px;top:588px;width:16px;height:16px"><svg width="16" height="16" viewBox="0 0 16 16"><circle cx="8" cy="8" r="8" fill="#8c8c8c"/></svg></div>
<div class="a" style="left:38px;top:617px;width:1826px;height:40px;background:#4c5b76"></div>
<div class="a" style="left:48px;top:628px;width:16px;height:16px"><svg width="16" height="16" viewBox="0 0 16 16"><rect x="4.5" y="0.5" width="7.5" height="7.5" fill="#dcae62" stroke="#c29247" stroke-width="0.6"/><rect x="0.5" y="8" width="15.5" height="7.8" fill="#dcae62" stroke="#c29247" stroke-width="0.6"/><line x1="8.25" y1="8" x2="8.25" y2="15.8" stroke="#c29247" stroke-width="0.6"/><rect x="7.9" y="0.5" width="0.9" height="2.6" fill="#8a6428"/><rect x="3.9" y="8" width="0.9" height="2.6" fill="#8a6428"/><rect x="5.6" y="5.6" width="1.4" height="1.4" fill="#9aa"/><rect x="1.6" y="13.4" width="1.4" height="1.4" fill="#9aa"/><circle cx="12" cy="12" r="4" fill="#7fbc4a"/><path d="M12 9.6v4.8M9.6 12h4.8" stroke="#e8f5dc" stroke-width="1.1"/></svg></div>
<div class="a" style="left:129px;top:628px;width:16px;height:16px"><svg width="16" height="16" viewBox="0 0 16 16"><circle cx="8" cy="8" r="8" fill="#8cc43e"/><path d="M8 3.3v9.4M3.3 8h9.4" stroke="#fff" stroke-width="2.3"/></svg></div>
<div class="a" style="left:169px;top:628px;width:16px;height:16px"><svg width="16" height="16" viewBox="0 0 16 16"><defs><linearGradient id="xg" x1="0" y1="0" x2="1" y2="1"><stop offset="0" stop-color="#a82a22"/><stop offset="1" stop-color="#941812"/></linearGradient></defs><path d="M1.8 1.8l12.4 12.4M14.2 1.8L1.8 14.2" stroke="url(#xg)" stroke-width="4.6"/></svg></div>
<div class="a" style="left:216px;top:628px;width:16px;height:16px"><svg width="16" height="16" viewBox="0 0 16 16"><rect x="4.7" y="0" width="6.6" height="4.8" fill="#55b9e8"/><path d="M4.7 1.6h6.6M4.7 3.2h6.6" stroke="#fff" stroke-width="0.5" opacity="0.6"/><path d="M8 4.8v1.2L3 10.5M8 6l5 4.5" stroke="#999" stroke-width="0.9" fill="none"/><circle cx="3" cy="12.7" r="3.2" fill="#f2c431"/><circle cx="12.7" cy="12.7" r="3.2" fill="#f2c431"/><path d="M2 12l1.8 1.6M11.7 12l1.8 1.6" stroke="#888" stroke-width="0.6"/></svg></div>
<div class="a" style="left:258px;top:628px;width:16px;height:16px"><svg width="16" height="16" viewBox="0 0 16 16"><rect x="1" y="1.2" width="14" height="11" fill="#fff" stroke="#1a1a1a" stroke-width="1"/><path d="M1 1.5l7 5.3 7-5.3M1.2 12l5-4.5M14.8 12l-5-4.5" stroke="#333" stroke-width="0.8" fill="none"/><ellipse cx="6" cy="13.3" rx="2.5" ry="2" fill="none" stroke="#f0c23a" stroke-width="1.4"/><ellipse cx="11.5" cy="13.3" rx="2.5" ry="2" fill="none" stroke="#49b2e4" stroke-width="1.4"/><path d="M7.5 13.3h2.5" stroke="#888" stroke-width="1"/></svg></div>
<div class="a" style="left:288px;top:628px;width:16px;height:16px"><svg width="16" height="16" viewBox="0 0 16 16"><path d="M0.4 15.6C0.6 12.6 2.8 11.2 5.3 10.9L7.4 12.2 9.5 10.9C12 11.2 14.4 12.6 14.8 15.6z" fill="#3383cc"/><rect x="6" y="9" width="2.8" height="2.6" fill="#f0bc7c"/><ellipse cx="7.4" cy="6.2" rx="3.3" ry="3.9" fill="#f3c283"/><path d="M4.1 5.6C3.8 2.2 5.4 1 7.4 1s3.6 1.2 3.3 4.6C10.4 4 9.6 3.3 7.4 3.3S4.4 4 4.1 5.6z" fill="#17110c"/><path d="M11.3 14.6l4-4.8" stroke="#f0a050" stroke-width="2.1"/><path d="M14.6 10.6l1-1.2" stroke="#e8e8e8" stroke-width="2.1"/></svg></div>
<div class="a" style="left:326px;top:628px;width:16px;height:16px"><svg width="16" height="16" viewBox="0 0 16 16"><circle cx="8" cy="8" r="8" fill="#d9862c"/><path d="M8 3.3v9.4M3.3 8h9.4" stroke="#fff" stroke-width="2.3"/></svg></div>
<div class="a txt" style="left:367px;top:627px">10</div>
<div class="a txt" style="left:404px;top:627px">French</div>
<div class="a dbox" style="left:505px;top:629px;width:56px;height:17px"></div>
<div class="a txt" style="left:510px;top:627px">Subti...</div>
<div class="a dbox" style="left:571px;top:629px;width:171px;height:17px"></div>
<div class="a txt" style="left:576px;top:627px">QC</div>
<div class="a" style="left:807px;top:628px;width:16px;height:16px"><svg width="16" height="16" viewBox="0 0 16 16" style="overflow:visible"><rect x="1.9" y="1.9" width="11.6" height="11.6" rx="2" fill="none" stroke="#f0c040" stroke-width="1.8"/><path d="M4.3 6.8L8.9 10.8L16.5 3.3" stroke="#58bdea" stroke-width="2.5" fill="none"/></svg></div>
<div class="a" style="left:903px;top:628px;width:16px;height:16px"><svg width="16" height="16" viewBox="0 0 16 16"><rect x="0.7" y="0.7" width="14.6" height="14.6" rx="3" fill="rgba(255,255,255,0.04)" stroke="#6a6a6a" stroke-width="1.3"/><path d="M3.8 3h5.5l2.9 2.9v7.3H3.8z" fill="none" stroke="#363636" stroke-width="1.1"/><path d="M4.8 7.8h6.4M4.8 9.9h6.4M4.8 12h6.4" stroke="#3a3a3a" stroke-width="0.8"/><path d="M5 4.5h2.5" stroke="#6a6a6a" stroke-width="0.7"/></svg></div>
<div class="a" style="left:973px;top:629px;width:16px;height:14px"><svg width="17" height="13" viewBox="0 0 17 13"><rect x="0" y="0.5" width="5.5" height="5.5" rx="1" fill="#d8904a"/><path d="M1.5 5.5l1.2-3.5 1.5 3.5" stroke="#3a2a1a" stroke-width="0.8" fill="none"/><rect x="5.5" y="0.5" width="5.5" height="5.5" rx="1" fill="#78c8ea"/><path d="M6.5 3h3.5M6.5 4.5h3.5" stroke="#333" stroke-width="0.6"/><rect x="11" y="0.5" width="5.5" height="5.5" rx="1" fill="#bcd878"/><path d="M12 5l3.5-3.5" stroke="#222" stroke-width="1.2"/><rect x="3" y="6.5" width="5.5" height="5.5" rx="1.5" fill="#a88ad0"/><circle cx="5.75" cy="9.25" r="1.5" fill="none" stroke="#7a5aa0" stroke-width="0.6"/><rect x="8.5" y="6.5" width="5.5" height="5.5" rx="1.5" fill="#e88880"/><rect x="9.8" y="7.8" width="3" height="2.6" rx="0.5" fill="#111"/></svg></div>
<div class="a dbox" style="left:1085px;top:629px;width:45px;height:17px"></div>
<div class="a dbox" style="left:1140px;top:629px;width:176px;height:17px"></div>
<div class="a dbox" style="left:1340px;top:629px;width:131px;height:17px"></div>
<div class="a" style="left:1508px;top:628px;width:16px;height:16px"><svg width="16" height="16" viewBox="0 0 16 16"><circle cx="8" cy="8" r="8" fill="#cdcdcd"/></svg></div>
<div class="a" style="left:1573px;top:628px;width:16px;height:16px"><svg width="16" height="16" viewBox="0 0 16 16"><path d="M0.8 15.2l2.6-2.6M12.6 3.4l2.6-2.6" stroke="#8cc04a" stroke-width="1.4"/><ellipse cx="8" cy="8" rx="6.6" ry="4.5" transform="rotate(-45 8 8)" fill="#9ccd5a"/><path d="M5.3 7.2l3.5 3.5" stroke="#7aaa3a" stroke-width="0.8"/></svg></div>
<div class="a" style="left:1624px;top:628px;width:16px;height:16px"><svg width="16" height="16" viewBox="0 0 16 16"><circle cx="8" cy="8" r="8" fill="#f6cc38"/><path d="M5.8 3.8v8.4l6.2-4.2z" fill="#6a5818"/></svg></div>
<div class="a" style="left:1665px;top:628px;width:16px;height:16px"><svg width="16" height="16" viewBox="0 0 16 16"><rect x="0.6" y="1.6" width="13.8" height="10.8" fill="#fff" stroke="#222" stroke-width="1.1"/><path d="M0.6 1.8l7 5 7-5M0.8 12.2l5-4.2M14.2 12.2l-5-4.2" stroke="#333" stroke-width="0.7" fill="none"/><circle cx="11.5" cy="11.5" r="4.3" fill="#b8b8b8" stroke="#ddd" stroke-width="0.6"/><path d="M9 11.5h4.3M11.6 9.6l2 1.9-2 1.9" stroke="#fff" stroke-width="1.3" fill="none"/></svg></div>
<div class="a dbox" style="left:1702px;top:624px;width:114px;height:25px;border-radius:9px"></div>
<div class="a" style="left:1702px;top:624px;width:120px;height:26px"><svg width="120" height="26" viewBox="0 0 120 26"><g stroke="#f2f2f2" stroke-width="1.2" fill="none"><path d="M10 19.4h12.6l5-11.2"/><path d="M27 19.4h12.8l5-11.2"/><path d="M44.5 19.4h23.7"/><path d="M71.2 19.4h12.5"/><path d="M86.1 19.4h12.7"/></g><rect x="84.2" y="11.2" width="1.6" height="1.6" fill="#f2f2f2"/><rect x="84.2" y="16.2" width="1.6" height="1.6" fill="#f2f2f2"/></svg></div>
<div class="a" style="left:1844px;top:628px;width:16px;height:16px"><svg width="16" height="16" viewBox="0 0 16 16"><circle cx="8" cy="8" r="8" fill="#8c8c8c"/></svg></div>
<div class="a" style="left:74px;top:257px;width:1px;height:400px;background:#2a2a2a"></div>
<div class="a" style="left:119px;top:257px;width:1px;height:400px;background:#2a2a2a"></div>
<div class="a" style="left:154px;top:257px;width:1px;height:400px;background:#2a2a2a"></div>
<div class="a" style="left:199px;top:257px;width:1px;height:400px;background:#2a2a2a"></div>
<div class="a" style="left:249px;top:257px;width:1px;height:400px;background:#2a2a2a"></div>
<div class="a" style="left:279px;top:257px;width:1px;height:400px;background:#2a2a2a"></div>
<div class="a" style="left:309px;top:257px;width:1px;height:400px;background:#2a2a2a"></div>
<div class="a" style="left:359px;top:257px;width:1px;height:400px;background:#2a2a2a"></div>
<div class="a" style="left:396px;top:257px;width:1px;height:400px;background:#2a2a2a"></div>
<div class="a" style="left:496px;top:257px;width:1px;height:400px;background:#2a2a2a"></div>
<div class="a" style="left:562px;top:257px;width:1px;height:400px;background:#2a2a2a"></div>
<div class="a" style="left:756px;top:257px;width:1px;height:400px;background:#2a2a2a"></div>
<div class="a" style="left:876px;top:257px;width:1px;height:400px;background:#2a2a2a"></div>
<div class="a" style="left:946px;top:257px;width:1px;height:400px;background:#2a2a2a"></div>
<div class="a" style="left:1016px;top:257px;width:1px;height:400px;background:#2a2a2a"></div>
<div class="a" style="left:1046px;top:257px;width:1px;height:400px;background:#2a2a2a"></div>
<div class="a" style="left:1076px;top:257px;width:1px;height:400px;background:#2a2a2a"></div>
<div class="a" style="left:1131px;top:257px;width:1px;height:400px;background:#2a2a2a"></div>
<div class="a" style="left:1331px;top:257px;width:1px;height:400px;background:#2a2a2a"></div>
<div class="a" style="left:1481px;top:257px;width:1px;height:400px;background:#2a2a2a"></div>
<div class="a" style="left:1551px;top:257px;width:1px;height:400px;background:#2a2a2a"></div>
<div class="a" style="left:1611px;top:257px;width:1px;height:400px;background:#2a2a2a"></div>
<div class="a" style="left:1653px;top:257px;width:1px;height:400px;background:#2a2a2a"></div>
<div class="a" style="left:1693px;top:257px;width:1px;height:400px;background:#2a2a2a"></div>
<div class="a" style="left:1835px;top:257px;width:1px;height:400px;background:#2a2a2a"></div>
<div class="a" style="left:38px;top:257px;width:1px;height:456px;background:#2a2a2a"></div>
<div class="a" style="left:38px;top:657px;width:1826px;height:1px;background:#2a2a2a"></div>
<div class="a" style="left:38px;top:658px;width:1826px;height:18px;background:#fff"></div>
<div class="a" style="left:39px;top:659px;width:1824px;height:16px;background:#f0f0f0"></div>
<div class="a" style="left:56px;top:661px;width:540px;height:13px;background:#c3c3c3"></div>
<svg class="a" style="left:43px;top:663px" width="6" height="9" viewBox="0 0 6 9"><path d="M6 0v9L0 4.5z" fill="#8a8a8a"/></svg>
<svg class="a" style="left:1853px;top:663px" width="6" height="9" viewBox="0 0 6 9"><path d="M0 0v9L6 4.5z" fill="#333"/></svg>
<div class="a" style="left:1864px;top:257px;width:17px;height:401px;background:#f0f0f0;border-left:1px solid #fff"></div>
<div class="a" style="left:1864px;top:658px;width:17px;height:18px;background:#dcdcdc"></div>
<div class="a" style="left:1867px;top:274px;width:12px;height:247px;background:#c3c3c3"></div>
<svg class="a" style="left:1868px;top:263px" width="9" height="5" viewBox="0 0 9 5"><path d="M0 5h9L4.5 0z" fill="#a0a0a0"/></svg>
<svg class="a" style="left:1868px;top:647px" width="9" height="5" viewBox="0 0 9 5"><path d="M0 0h9L4.5 5z" fill="#333"/></svg>
<div class="a" style="left:38px;top:676px;width:1826px;height:1px;background:#2a2a2a"></div>
<div class="a" style="left:38px;top:677px;width:1826px;height:36px;background:#585858"></div>
<div class="a" style="left:74px;top:677px;width:1px;height:36px;background:#2a2a2a"></div>
<div class="a" style="left:119px;top:677px;width:1px;height:36px;background:#2a2a2a"></div>
<div class="a" style="left:154px;top:677px;width:1px;height:36px;background:#2a2a2a"></div>
<div class="a" style="left:199px;top:677px;width:1px;height:36px;background:#2a2a2a"></div>
<div class="a" style="left:249px;top:677px;width:1px;height:36px;background:#2a2a2a"></div>
<div class="a" style="left:279px;top:677px;width:1px;height:36px;background:#2a2a2a"></div>
<div class="a" style="left:309px;top:677px;width:1px;height:36px;background:#2a2a2a"></div>
<div class="a" style="left:359px;top:677px;width:1px;height:36px;background:#2a2a2a"></div>
<div class="a" style="left:396px;top:677px;width:1px;height:36px;background:#2a2a2a"></div>
<div class="a" style="left:496px;top:677px;width:1px;height:36px;background:#2a2a2a"></div>
<div class="a" style="left:562px;top:677px;width:1px;height:36px;background:#2a2a2a"></div>
<div class="a" style="left:756px;top:677px;width:1px;height:36px;background:#2a2a2a"></div>
<div class="a" style="left:876px;top:677px;width:1px;height:36px;background:#2a2a2a"></div>
<div class="a" style="left:946px;top:677px;width:1px;height:36px;background:#2a2a2a"></div>
<div class="a" style="left:1016px;top:677px;width:1px;height:36px;background:#2a2a2a"></div>
<div class="a" style="left:1046px;top:677px;width:1px;height:36px;background:#2a2a2a"></div>
<div class="a" style="left:1076px;top:677px;width:1px;height:36px;background:#2a2a2a"></div>
<div class="a" style="left:1131px;top:677px;width:1px;height:36px;background:#2a2a2a"></div>
<div class="a" style="left:1331px;top:677px;width:1px;height:36px;background:#2a2a2a"></div>
<div class="a" style="left:1481px;top:677px;width:1px;height:36px;background:#2a2a2a"></div>
<div class="a" style="left:1551px;top:677px;width:1px;height:36px;background:#2a2a2a"></div>
<div class="a" style="left:1611px;top:677px;width:1px;height:36px;background:#2a2a2a"></div>
<div class="a" style="left:1653px;top:677px;width:1px;height:36px;background:#2a2a2a"></div>
<div class="a" style="left:1693px;top:677px;width:1px;height:36px;background:#2a2a2a"></div>
<div class="a" style="left:1835px;top:677px;width:1px;height:36px;background:#2a2a2a"></div>
<div class="a" style="left:1864px;top:676px;width:17px;height:37px;background:#2c2c2c"></div>
<div class="a" style="left:749px;top:145px;width:136px;height:521px;border:5px solid #1f9a2c"></div>
<svg class="a" style="left:38px;top:20px" width="24" height="22" viewBox="0 0 24 22"><path d="M0 1h2.5v6.5H0zM0 14h3l5 7.5H0z" fill="#9a9ca0"/><path d="M17 0.5h7v8zM17 21.5h7v-8z" fill="#5cc4ee"/><circle cx="12" cy="11" r="10.5" fill="#f5c343"/><path d="M2 0.5C7 3 10 7 10 11s-3 8-6 10.5C1.5 19 1.5 15 1.5 11S1.5 3 2 0.5z" fill="#8c6c1c"/><path d="M18.5 1.5c2.5 2 3.5 5.5 3.5 9.5s-1 7.5-3.5 9.5c-2.5-2-4-5.5-4-9.5s1.5-7.5 4-9.5z" fill="#9aa24c"/><rect x="9.5" y="8.2" width="4.5" height="5.5" fill="#2a2a2a"/><rect x="9.5" y="8.2" width="1.5" height="5.5" fill="#8a8a8a"/><rect x="14" y="8.5" width="1.2" height="5" fill="#5cc4ee"/></svg>
<div class="a" style="left:1806px;top:32px;width:10px;height:2px;background:#fff"></div>
<div class="a" style="left:1836px;top:26px;width:10px;height:10px;border:1.5px solid #fff;border-top-width:3px"></div>
<svg class="a" style="left:1865px;top:25px" width="12" height="12" viewBox="0 0 12 12"><path d="M1.2 1.2l9.6 9.6M10.8 1.2l-9.6 9.6" stroke="#fff" stroke-width="2"/></svg>
<div class="a" style="left:38px;top:713px;width:1843px;height:39px;background:linear-gradient(#292929 0%,#303030 25%,#3f3f3f 65%,#3b3b3b 100%)"></div>
<div class="a" style="left:46px;top:721px;width:18px;height:18px"><svg width="18" height="18" viewBox="0 0 18 18"><rect x="0" y="0" width="15" height="2" fill="#4cb4e4"/><path d="M0.5 2.5h14l-5 6v6l-4 1v-7z" fill="#8d8d8d"/><rect x="5" y="14" width="3" height="2" fill="#e8b52e"/><circle cx="13" cy="13" r="4" fill="#7dbb45"/><path d="M13 10.8v4.4M10.8 13h4.4" stroke="#fff" stroke-width="1.2"/></svg></div>
<div class="a tool" style="left:70px;top:726px;color:#f2f2f2;">Range options</div>
<div class="a" style="left:155px;top:721px;width:100px;height:26px;background:#f0a63c;border-radius:4px;border-bottom:1px solid #c8452a;box-shadow:0 0 0 1px #d86a30 inset"></div>
<div class="a" style="left:163px;top:721px;width:18px;height:18px"><svg width="18" height="18" viewBox="0 0 18 18"><g fill="#a09080"><rect x="7.6" y="0.3" width="2.8" height="3.5" transform="rotate(0 9 9)"/><rect x="7.6" y="0.3" width="2.8" height="3.5" transform="rotate(45 9 9)"/><rect x="7.6" y="0.3" width="2.8" height="3.5" transform="rotate(90 9 9)"/><rect x="7.6" y="0.3" width="2.8" height="3.5" transform="rotate(135 9 9)"/><rect x="7.6" y="0.3" width="2.8" height="3.5" transform="rotate(180 9 9)"/><rect x="7.6" y="0.3" width="2.8" height="3.5" transform="rotate(225 9 9)"/><rect x="7.6" y="0.3" width="2.8" height="3.5" transform="rotate(270 9 9)"/><rect x="7.6" y="0.3" width="2.8" height="3.5" transform="rotate(315 9 9)"/></g><circle cx="9" cy="9" r="5.6" fill="none" stroke="#a09080" stroke-width="2.6"/><circle cx="9" cy="9" r="4.3" fill="#e8a03a"/><g stroke="#a09080" stroke-width="1.2"><path d="M9 4.7v8.6M4.7 9h8.6"/></g><circle cx="9" cy="9" r="1.6" fill="#a09080"/></svg></div>
<div class="a tool" style="left:186px;top:726px;color:#151515;-webkit-text-stroke:0.35px #151515;">Grid layout</div>
<div class="a" style="left:265px;top:721px;width:18px;height:18px"><svg width="18" height="18" viewBox="0 0 18 18"><g fill="#9a9a9a"><rect x="7.6" y="0.3" width="2.8" height="3.5" transform="rotate(0 9 9)"/><rect x="7.6" y="0.3" width="2.8" height="3.5" transform="rotate(45 9 9)"/><rect x="7.6" y="0.3" width="2.8" height="3.5" transform="rotate(90 9 9)"/><rect x="7.6" y="0.3" width="2.8" height="3.5" transform="rotate(135 9 9)"/><rect x="7.6" y="0.3" width="2.8" height="3.5" transform="rotate(180 9 9)"/><rect x="7.6" y="0.3" width="2.8" height="3.5" transform="rotate(225 9 9)"/><rect x="7.6" y="0.3" width="2.8" height="3.5" transform="rotate(270 9 9)"/><rect x="7.6" y="0.3" width="2.8" height="3.5" transform="rotate(315 9 9)"/></g><circle cx="9" cy="9" r="5.6" fill="none" stroke="#9a9a9a" stroke-width="2.6"/><circle cx="9" cy="9" r="4.3" fill="#3a3a3a"/><g stroke="#9a9a9a" stroke-width="1.2"><path d="M9 4.7v8.6M4.7 9h8.6"/></g><circle cx="9" cy="9" r="1.6" fill="#9a9a9a"/></svg></div>
<div class="a tool" style="left:288px;top:726px;color:#f2f2f2;">Settings</div>
<div class="a" style="left:341px;top:722px;width:16px;height:16px"><svg width="16" height="16" viewBox="0 0 16 16"><circle cx="8" cy="8" r="8" fill="#8cc43e"/><path d="M8 3.3v9.4M3.3 8h9.4" stroke="#fff" stroke-width="2.3"/></svg></div>
<div class="a tool" style="left:363px;top:726px;color:#f2f2f2;">Add new task</div>
<div class="a" style="left:446px;top:722px;width:16px;height:16px"><svg width="16" height="16" viewBox="0 0 16 16"><circle cx="8" cy="8" r="8" fill="#8cc43e"/><path d="M8 3.3v9.4M3.3 8h9.4" stroke="#fff" stroke-width="2.3"/></svg></div>
<div class="a tool" style="left:467px;top:726px;color:#f2f2f2;">Add new step</div>
<div class="a" style="left:551px;top:722px;width:16px;height:16px"><svg width="16" height="16" viewBox="0 0 16 16"><rect x="4.5" y="0.5" width="7.5" height="7.5" fill="#dcae62" stroke="#c29247" stroke-width="0.6"/><rect x="0.5" y="8" width="15.5" height="7.8" fill="#dcae62" stroke="#c29247" stroke-width="0.6"/><line x1="8.25" y1="8" x2="8.25" y2="15.8" stroke="#c29247" stroke-width="0.6"/><rect x="7.9" y="0.5" width="0.9" height="2.6" fill="#8a6428"/><rect x="3.9" y="8" width="0.9" height="2.6" fill="#8a6428"/><rect x="5.6" y="5.6" width="1.4" height="1.4" fill="#9aa"/><rect x="1.6" y="13.4" width="1.4" height="1.4" fill="#9aa"/><circle cx="12" cy="12" r="4" fill="#7fbc4a"/><path d="M12 9.6v4.8M9.6 12h4.8" stroke="#e8f5dc" stroke-width="1.1"/></svg></div>
<div class="a tool" style="left:573px;top:726px;color:#f2f2f2;">Add new product</div>
<div class="a tool" style="left:683px;top:726px;color:#6aa8e8;">|</div>
<div class="a" style="left:714px;top:722px;width:16px;height:16px"><svg width="16" height="16" viewBox="0 0 16 16"><path d="M0.8 15.2l2.6-2.6M12.6 3.4l2.6-2.6" stroke="#8cc04a" stroke-width="1.4"/><ellipse cx="8" cy="8" rx="6.6" ry="4.5" transform="rotate(-45 8 8)" fill="#9ccd5a"/><path d="M5.3 7.2l3.5 3.5" stroke="#7aaa3a" stroke-width="0.8"/></svg></div>
<div class="a tool" style="left:735px;top:726px;color:#f2f2f2;">Connect all</div>
<div class="a" style="left:821px;top:721px;width:16px;height:16px"><svg width="16" height="16" viewBox="0 0 16 16"><path d="M3 0.5h7l4 4v11H3z" fill="#f4f4f4"/><path d="M10 0.5v4h4" fill="#ccc"/><circle cx="4" cy="4" r="3.5" fill="#3a9a48"/><path d="M4 2v4M2.5 4.5l1.5 1.5 1.5-1.5" stroke="#fff" stroke-width="1" fill="none"/><rect x="8" y="9" width="6" height="6" fill="#1f7a3a"/><path d="M9.3 10.3l3.4 3.4M12.7 10.3l-3.4 3.4" stroke="#fff" stroke-width="1"/></svg></div>
<div class="a tool" style="left:843px;top:726px;color:#f2f2f2;">Export to excel</div>
<div class="a" style="left:955px;top:721px;width:18px;height:16px"><svg width="18" height="16" viewBox="0 0 18 16"><circle cx="2.5" cy="2.5" r="2.3" fill="#8cc23f"/><path d="M1.3 2.5l1 1 1.6-2" stroke="#fff" stroke-width="0.8" fill="none"/><circle cx="2.5" cy="7.5" r="2.3" fill="#3a8ad8"/><rect x="2.1" y="6" width="0.8" height="3" fill="#fff"/><circle cx="2.5" cy="12.5" r="2.3" fill="#e0603a"/><rect x="1.3" y="12.1" width="2.4" height="0.8" fill="#fff"/><path d="M5.5 2.5h6M5.5 7.5h6M5.5 12.5h12" stroke="#e6e6e6" stroke-width="1.3"/><rect x="12" y="0.8" width="5.5" height="3.5" rx="0.8" fill="#e6e6e6"/><circle cx="14.7" cy="7.5" r="2" fill="#e6e6e6"/></svg></div>
<div class="a tool" style="left:977px;top:726px;color:#f2f2f2;">Apply automatic assignment</div>
<div class="a tool" style="left:1146px;top:726px;color:#6aa8e8;">|</div>
<div class="a" style="left:1178px;top:720px;width:16px;height:16px"><svg width="16" height="16" viewBox="0 0 16 16"><path d="M0.5 3h5l1.5 1.5h8.5v9H0.5z" fill="#f0cd6a"/><path d="M0.5 6h15v7.5H0.5z" fill="#f6d97e"/><path d="M2 14.5h13" stroke="#c8a040"/></svg></div>
<div class="a tool" style="left:1199px;top:726px;color:#f2f2f2;">Order files</div>
<div class="a" style="left:1266px;top:720px;width:16px;height:16px"><svg width="16" height="16" viewBox="0 0 16 16"><rect x="1" y="3" width="14" height="11" rx="2" fill="#f0cd6a"/><rect x="1" y="3" width="14" height="3" fill="#e2b850"/><path d="M3.5 3v11" stroke="#d84a2a" stroke-width="1"/><path d="M5 8.5h8M5 11h8" stroke="#d8b050" stroke-width="0.8"/></svg></div>
<div class="a tool" style="left:1287px;top:726px;color:#f2f2f2;">Order messages</div>
<div class="a tool" style="left:1390px;top:726px;color:#6aa8e8;">|</div>
<div class="a" style="left:38px;top:752px;width:1843px;height:37px;background:linear-gradient(#272727 0%,#2f2f2f 25%,#434343 65%,#3d3d3d 100%)"></div>
<svg class="a" style="left:51px;top:766px" width="9" height="10" viewBox="0 0 9 10"><path d="M7 0v9L0 4.5z" fill="#9a9a9a" transform="translate(1 0.5)"/><rect x="0" y="0" width="1.5" height="10" fill="#9a9a9a"/></svg>
<svg class="a" style="left:83px;top:766px" width="9" height="10" viewBox="0 0 9 10"><path d="M7 0v9L0 4.5z" fill="#9a9a9a" transform="translate(0 0.5)"/></svg>
<div class="a" style="left:101px;top:756px;width:30px;height:30px;background:#646464"></div>
<div class="a tool" style="left:101px;top:763px;width:30px;text-align:center;font-size:13px">1</div>
<svg class="a" style="left:143px;top:766px" width="9" height="10" viewBox="0 0 9 10"><path d="M0 0v9L7 4.5z" fill="#9a9a9a" transform="translate(0 0.5)"/></svg>
<svg class="a" style="left:173px;top:766px" width="9" height="10" viewBox="0 0 9 10"><path d="M0 0v9L7 4.5z" fill="#9a9a9a" transform="translate(0 0.5)"/><rect x="7.5" y="0" width="1.5" height="10" fill="#9a9a9a"/></svg>
<div class="a tool" style="left:205px;top:764px;color:#f2f2f2;">Page</div>
<div class="a inp" style="left:239px;top:757px;width:68px;height:28px;border-radius:3px"></div>
<div class="a tool" style="left:248px;top:763px;color:#1a2840;font-size:13px">1</div>
<div class="a tool" style="left:315px;top:764px;color:#f2f2f2;">of 1</div>
<div class="a" style="left:350px;top:757px;width:68px;height:28px;background:#2b2b2b;border-radius:3px"></div>
<div class="a inp" style="left:350px;top:757px;width:43px;height:28px;border-radius:3px 0 0 3px"></div>
<div class="a tool" style="left:358px;top:763px;color:#222;font-size:13px">20</div>
<svg class="a" style="left:401px;top:767px" width="10" height="8" viewBox="0 0 10 8"><path d="M0 1h10l-5 6z" fill="#f2f2f2"/></svg>
<div class="a tool" style="left:426px;top:764px;color:#f2f2f2;">items per page</div>
<div class="a tool" style="left:1667px;top:764px;color:#f2f2f2;">1 - 15 of 15 items</div>
<div class="a" style="left:1773px;top:758px;width:26px;height:26px;border-radius:11px;background:#252525"></div>
<div class="a" style="left:1813px;top:758px;width:26px;height:26px;border-radius:11px;background:#252525"></div>
<div class="a" style="left:1853px;top:758px;width:26px;height:26px;border-radius:11px;background:#252525"></div>
<svg class="a" style="left:1777px;top:762px" width="18" height="18" viewBox="0 0 18 18"><path d="M9 1v16" stroke="#fff" stroke-width="2"/><path d="M9 1v16" stroke="#3a4ad8" stroke-width="0.8"/><path d="M1 9h6M11 9h6" stroke="#fff" stroke-width="1.5"/><path d="M1 9l3-3v6zM17 9l-3-3v6z" fill="#fff"/></svg>
<svg class="a" style="left:1817px;top:762px" width="18" height="18" viewBox="0 0 18 18"><path d="M2 3l7 7v6h2v-7l5-5" stroke="#fff" stroke-width="2" fill="none"/><path d="M10 3l6 5" stroke="#fff" stroke-width="2"/></svg>
<svg class="a" style="left:1857px;top:762px" width="18" height="18" viewBox="0 0 18 18"><path d="M14.2 5.5A6.2 6.2 0 1 0 15.2 9" stroke="#fff" stroke-width="2" fill="none"/><path d="M10.5 1.5l5.5 2-2.5 4.5z" fill="#fff"/></svg>
<div class="a" style="left:38px;top:789px;width:1843px;height:76px;background:#272626;border-radius:4px 0 4px 4px"></div>
<div class="a tool" style="left:52px;top:820px">Enable column filtering</div>
<div class="a" style="left:178px;top:813px;width:26px;height:26px"><svg width="26" height="26" viewBox="0 0 26 26"><rect x="0" y="0" width="18" height="2.5" fill="#4cb4e4"/><path d="M0.5 3h17l-6 7v7l-5 1v-8z" fill="#8d8d8d"/><path d="M7 17l2 5 2-3z" fill="#e8b52e"/><path d="M6 17l4 4 9-9" stroke="#4cc23a" stroke-width="3" fill="none"/></svg></div>
<div class="a" style="left:207px;top:804px;width:72px;height:45px;background:linear-gradient(#2c2c2c,#393939 60%,#333)"></div>
<div class="a tool" style="left:210px;top:821px">Update date</div>
<div class="a" style="left:279px;top:804px;width:266px;height:45px;background:#4e4e4e"></div>
<div class="a" style="left:305px;top:813px;width:198px;height:28px;background:#2b2b2b;border-radius:4px"></div>
<div class="a inp" style="left:305px;top:813px;width:148px;height:28px;border-radius:4px 0 0 4px"></div>
<svg class="a" style="left:458px;top:819px" width="16" height="16" viewBox="0 0 16 16"><rect x="1.5" y="3" width="13" height="11.5" fill="none" stroke="#eee" stroke-width="1.3"/><line x1="1.5" y1="6" x2="14.5" y2="6" stroke="#eee" stroke-width="1.3"/><rect x="4" y="1" width="1.3" height="3" fill="#eee"/><rect x="10.7" y="1" width="1.3" height="3" fill="#eee"/><rect x="9" y="9.5" width="3.5" height="3" fill="#eee"/></svg>
<svg class="a" style="left:483px;top:819px" width="16" height="16" viewBox="0 0 16 16"><circle cx="8" cy="8" r="6.5" fill="none" stroke="#eee" stroke-width="1.3"/><path d="M8 4v4.5h3.5" fill="none" stroke="#eee" stroke-width="1.3"/></svg>
<div class="a" style="left:505px;top:809px;width:31px;height:36px;background:#2a2a2a;border-radius:4px 12px 12px 4px"></div>
<div class="a" style="left:511px;top:818px;width:18px;height:18px"><svg width="18" height="18" viewBox="0 0 18 18"><g fill="#555"><rect x="7.6" y="0.3" width="2.8" height="3.5" transform="rotate(0 9 9)"/><rect x="7.6" y="0.3" width="2.8" height="3.5" transform="rotate(45 9 9)"/><rect x="7.6" y="0.3" width="2.8" height="3.5" transform="rotate(90 9 9)"/><rect x="7.6" y="0.3" width="2.8" height="3.5" transform="rotate(135 9 9)"/><rect x="7.6" y="0.3" width="2.8" height="3.5" transform="rotate(180 9 9)"/><rect x="7.6" y="0.3" width="2.8" height="3.5" transform="rotate(225 9 9)"/><rect x="7.6" y="0.3" width="2.8" height="3.5" transform="rotate(270 9 9)"/><rect x="7.6" y="0.3" width="2.8" height="3.5" transform="rotate(315 9 9)"/></g><circle cx="9" cy="9" r="5.6" fill="none" stroke="#555" stroke-width="2.6"/><circle cx="9" cy="9" r="4.3" fill="#2a2a2a"/><g stroke="#555" stroke-width="1.2"><path d="M9 4.7v8.6M4.7 9h8.6"/></g><circle cx="9" cy="9" r="1.6" fill="#555"/></svg></div>
<div class="a" style="left:551px;top:805px;width:66px;height:42px;background:linear-gradient(#2a2a2a,#383838 60%,#333)"></div>
<div class="a tool" style="left:554px;top:810px;font-size:12px">Edit mode:</div>
<div class="a tool" style="left:560px;top:828px;font-size:12px;font-weight:bold">click cell</div>
<div class="a" style="left:617px;top:806px;width:120px;height:42px;background:#4e4e4e"></div>
<div class="a" style="left:618px;top:812px;width:38px;height:30px;border-radius:4px;background:linear-gradient(#2f2f2f,#262626);"></div>
<div class="a" style="left:629px;top:819px;width:16px;height:16px"><svg width="16" height="16" viewBox="0 0 16 16"><rect x="0.5" y="0.5" width="4.4" height="4.4" fill="#f4f4f4"/><rect x="0.5" y="5.7" width="4.4" height="4.4" fill="#f4f4f4"/><rect x="0.5" y="10.9" width="4.4" height="4.4" fill="#f4f4f4"/><rect x="5.7" y="0.5" width="4.4" height="4.4" fill="#f4f4f4"/><rect x="5.7" y="5.7" width="4.4" height="4.4" fill="#f4f4f4"/><rect x="5.7" y="10.9" width="4.4" height="4.4" fill="#f4f4f4"/><rect x="10.9" y="0.5" width="4.4" height="4.4" fill="#f4f4f4"/><rect x="10.9" y="5.7" width="4.4" height="4.4" fill="#f4f4f4"/><rect x="10.9" y="10.9" width="4.4" height="4.4" fill="#f4f4f4"/></svg></div>
<div class="a" style="left:658px;top:812px;width:38px;height:30px;border-radius:4px;background:linear-gradient(#2f2f2f,#262626);"></div>
<div class="a" style="left:669px;top:819px;width:16px;height:16px"><svg width="16" height="16" viewBox="0 0 16 16"><rect x="0.5" y="0.5" width="4.4" height="4.4" fill="#dcdcdc"/><rect x="0.5" y="5.7" width="4.4" height="4.4" fill="#dcdcdc"/><rect x="0.5" y="10.9" width="4.4" height="4.4" fill="#dcdcdc"/><rect x="5.7" y="0.5" width="4.4" height="4.4" fill="#dcdcdc"/><rect x="5.7" y="5.7" width="4.4" height="4.4" fill="#5aa8e8"/><rect x="5.7" y="10.9" width="4.4" height="4.4" fill="#dcdcdc"/><rect x="10.9" y="0.5" width="4.4" height="4.4" fill="#dcdcdc"/><rect x="10.9" y="5.7" width="4.4" height="4.4" fill="#dcdcdc"/><rect x="10.9" y="10.9" width="4.4" height="4.4" fill="#dcdcdc"/></svg></div>
<div class="a" style="left:698px;top:812px;width:38px;height:30px;border-radius:4px;background:linear-gradient(#3a7ae0,#2a62c8);border:1px solid #5a9af0;"></div>
<div class="a" style="left:709px;top:819px;width:16px;height:16px"><svg width="16" height="16" viewBox="0 0 16 16"><rect x="0.5" y="0.5" width="4.4" height="4.4" fill="#dcdcdc"/><rect x="0.5" y="5.7" width="4.4" height="4.4" fill="#dcdcdc"/><rect x="0.5" y="10.9" width="4.4" height="4.4" fill="#dcdcdc"/><rect x="5.7" y="0.5" width="4.4" height="4.4" fill="#dcdcdc"/><rect x="5.7" y="5.7" width="4.4" height="4.4" fill="#6ab8f0"/><rect x="5.7" y="10.9" width="4.4" height="4.4" fill="#dcdcdc"/><rect x="10.9" y="0.5" width="4.4" height="4.4" fill="#dcdcdc"/><rect x="10.9" y="5.7" width="4.4" height="4.4" fill="#dcdcdc"/><rect x="10.9" y="10.9" width="4.4" height="4.4" fill="#dcdcdc"/></svg></div>
<div class="a" style="left:35px;top:875px;width:77px;height:34px;background:linear-gradient(#333,#272727);border-radius:4px;border:1px solid #2a2a2a"></div>
<svg class="a" style="left:44px;top:880px" width="24" height="24" viewBox="0 0 24 24"><circle cx="12" cy="12" r="10" fill="none" stroke="#d93a35" stroke-width="2.6"/><path d="M5 5l14 14" stroke="#d93a35" stroke-width="2.6"/></svg>
<div class="a tool" style="left:73px;top:884px;font-size:12px">Close</div>
<div class="a" style="left:139px;top:868px;width:1746px;height:47px;background:#272626;border-radius:4px"></div>
<div class="a" style="left:352px;top:871px;font-size:11.5px;line-height:14px;white-space:nowrap;color:#e8e8e8">Customer: <b style="color:#fff">Barcelos Broductions</b></div>
<div class="a" style="left:541px;top:871px;font-size:11.5px;line-height:14px;white-space:nowrap;color:#e8e8e8">Title: <b style="color:#fff">To Supply a Script</b></div>
<div class="a" style="left:684px;top:871px;font-size:11.5px;line-height:14px;white-space:nowrap;color:#e8e8e8">Series: <b style="color:#fff">Pivot Language</b></div>
<div class="a" style="left:821px;top:871px;font-size:11.5px;line-height:14px;white-space:nowrap;color:#e8e8e8">Episode: <b style="color:#fff">4</b></div>
<div class="a" style="left:889px;top:871px;font-size:11.5px;line-height:14px;white-space:nowrap;color:#e8e8e8">Script: <b style="color:#fff">Without script</b></div>
<div class="a" style="left:1019px;top:871px;font-size:11.5px;line-height:14px;white-space:nowrap;color:#e8e8e8">Source language: <b style="color:#fff">Japanese</b></div>
<div class="a" style="left:1178px;top:871px;font-size:11.5px;line-height:14px;white-space:nowrap;color:#e8e8e8">Pivot language: <b style="color:#fff">English</b></div>
<div class="a" style="left:1316px;top:871px;font-size:11.5px;line-height:14px;white-space:nowrap;color:#e8e8e8">Target languages: <b style="color:#fff">English,Europen Spanish,French,Portuguese</b></div>
<div class="a" style="left:837px;top:920px;font-size:10px;line-height:12px;white-space:nowrap;color:#f4f4f4;letter-spacing:0px">Copyright © 2012 <span style="color:#8a8a8a">O</span><span style="color:#e8b52e">O</span><span style="color:#3fa8dc">O</span><span style="color:#8a8a8a">NA.NET</span> ltd. All rights reserved.</div>
<div class="a" style="left:837px;top:933px;font-size:10px;line-height:12px;white-space:nowrap;color:#8a8a8a;letter-spacing:0px">Copyright © 2012 <span style="color:#444">O</span><span style="color:#8a7020">O</span><span style="color:#2a6a8a">O</span><span style="color:#444">NA.NET</span> ltd. All rights reserved.</div>
</body></html>
